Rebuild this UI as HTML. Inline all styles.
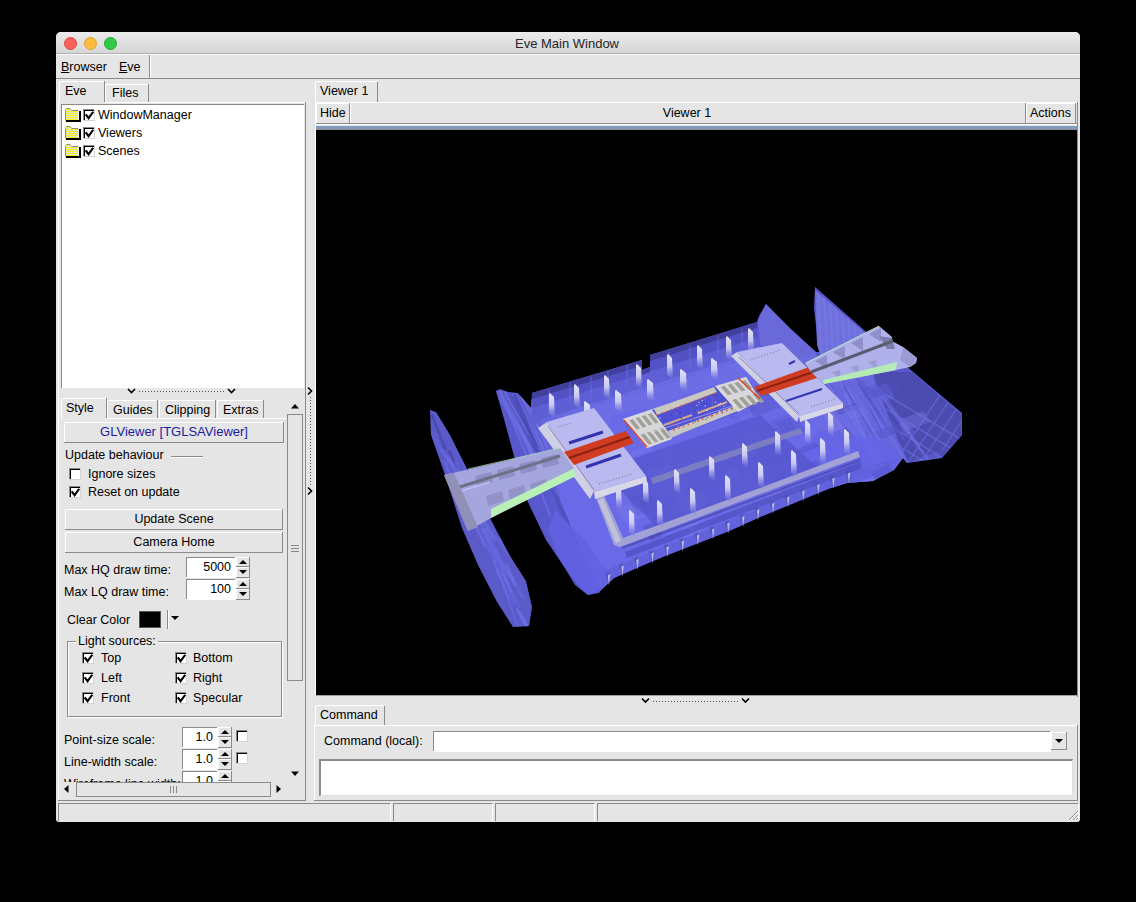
<!DOCTYPE html>
<html><head><meta charset="utf-8"><style>
html,body{margin:0;padding:0}
body{width:1136px;height:902px;background:#000;overflow:hidden;position:relative;font-family:"Liberation Sans",sans-serif}
.a{position:absolute}
.t{position:absolute;font-size:12.5px;line-height:14px;white-space:nowrap;color:#000}
svg.a{overflow:visible}
</style></head><body>
<div class="a" style="left:56px;top:32px;width:1024px;height:790px;background:#e5e5e5;border-radius:5px 5px 3px 3px;"></div>
<div class="a" style="left:56px;top:32px;width:1024px;height:21px;background:linear-gradient(#ebebeb,#d5d5d5);border-radius:5px 5px 0 0;"></div>
<div class="a" style="left:56px;top:53px;width:1024px;height:1px;background:#b0b0b0;"></div>
<div class="a" style="left:56px;top:54px;width:1024px;height:1px;background:#fafafa;"></div>
<div class="a" style="left:64px;top:37px;width:11px;height:11px;border-radius:50%;background:#fc605c;border:0.5px solid #e0443e"></div>
<div class="a" style="left:84px;top:37px;width:11px;height:11px;border-radius:50%;background:#fdbc40;border:0.5px solid #dea123"></div>
<div class="a" style="left:104px;top:37px;width:11px;height:11px;border-radius:50%;background:#34c84a;border:0.5px solid #1aab29"></div>
<div class="t" style="left:367px;width:400px;text-align:center;top:37px;font-size:13px;color:#262626">Eve Main Window</div>
<div class="a" style="left:56px;top:78px;width:1024px;height:1px;background:#8a8a8a;"></div>
<div class="a" style="left:149px;top:55px;width:1px;height:23px;background:#8a8a8a;"></div>
<div class="a" style="left:150px;top:55px;width:1px;height:23px;background:#fff;"></div>
<div class="t" style="left:61px;top:60px;font-size:12.5px;color:#000;"><u>B</u>rowser</div>
<div class="t" style="left:119px;top:60px;font-size:12.5px;color:#000;"><u>E</u>ve</div>
<div class="a" style="left:58px;top:102px;width:248px;height:1px;background:#fff;"></div>
<div class="a" style="left:58px;top:102px;width:1px;height:698px;background:#fff;"></div>
<div class="a" style="left:305px;top:102px;width:1px;height:698px;background:#8a8a8a;"></div>
<div class="a" style="left:58px;top:800px;width:248px;height:1px;background:#8a8a8a;"></div>
<div class="a" style="left:59px;top:81px;width:46px;height:22px;background:#e5e5e5;"></div>
<div class="a" style="left:60px;top:81px;width:44px;height:1px;background:#fff;"></div>
<div class="a" style="left:59px;top:82px;width:1px;height:20px;background:#fff;"></div>
<div class="a" style="left:104px;top:81px;width:1px;height:21px;background:#8a8a8a;"></div>
<div class="a" style="left:106px;top:84px;width:42px;height:1px;background:#fff;"></div>
<div class="a" style="left:105px;top:84px;width:1px;height:18px;background:#fff;"></div>
<div class="a" style="left:148px;top:84px;width:1px;height:18px;background:#8a8a8a;"></div>
<div class="t" style="left:65px;top:84px;font-size:12.5px;color:#000;">Eve</div>
<div class="t" style="left:112px;top:86px;font-size:12.5px;color:#000;">Files</div>
<div class="a" style="left:61px;top:104px;width:243px;height:284px;background:#fff;"></div>
<div class="a" style="left:61px;top:104px;width:243px;height:1px;background:#8a8a8a;"></div>
<div class="a" style="left:61px;top:104px;width:1px;height:284px;background:#8a8a8a;"></div>
<div class="a" style="left:61px;top:387px;width:243px;height:1px;background:#fff;"></div>
<div class="a" style="left:303px;top:104px;width:1px;height:284px;background:#fff;"></div>
<div class="a" style="left:62px;top:105px;width:241px;height:282px;background:#fff;"></div>
<div class="a" style="left:61px;top:104px;width:243px;height:1px;background:#8a8a8a;"></div>
<div class="a" style="left:61px;top:104px;width:1px;height:284px;background:#8a8a8a;"></div>
<svg class="a" style="left:65px;top:108px" width="16" height="13" viewBox="0 0 16 13"><defs><pattern id="fp" width="2" height="2" patternUnits="userSpaceOnUse"><rect width="2" height="2" fill="#d8d8c8"/><rect width="1" height="1" fill="#ffff20"/><rect x="1" y="1" width="1" height="1" fill="#ffff20"/></pattern></defs><path d="M0.5 12.5 L0.5 2.5 L1.5 0.5 L5 0.5 L6.5 2.5 L13.5 2.5" stroke="#8a8a8a" stroke-width="1" fill="none"/><rect x="1" y="1" width="4" height="2" fill="url(#fp)"/><rect x="1" y="3" width="12" height="9" fill="url(#fp)"/><path d="M1 13 L15 13 L15 3" stroke="#000" stroke-width="2" fill="none"/></svg>
<div class="a" style="left:83px;top:109px;width:12px;height:12px;background:#fff;"></div>
<div class="a" style="left:83px;top:109px;width:12px;height:1px;background:#8a8a8a;"></div>
<div class="a" style="left:83px;top:109px;width:1px;height:12px;background:#8a8a8a;"></div>
<div class="a" style="left:84px;top:110px;width:10px;height:1px;background:#000;"></div>
<div class="a" style="left:84px;top:110px;width:1px;height:10px;background:#000;"></div>
<div class="a" style="left:83px;top:120px;width:12px;height:1px;background:#d4d4d4;"></div>
<div class="a" style="left:94px;top:109px;width:1px;height:12px;background:#d4d4d4;"></div>
<svg class="a" style="left:83px;top:109px" width="12" height="12"><path d="M3.3 6.2 L5.6 9.2 L9.6 3.6" stroke="#000" stroke-width="2.1" fill="none" stroke-linecap="square"/></svg>
<div class="t" style="left:98px;top:108px;font-size:12.5px;color:#000;">WindowManager</div>
<svg class="a" style="left:65px;top:126px" width="16" height="13" viewBox="0 0 16 13"><defs><pattern id="fp" width="2" height="2" patternUnits="userSpaceOnUse"><rect width="2" height="2" fill="#d8d8c8"/><rect width="1" height="1" fill="#ffff20"/><rect x="1" y="1" width="1" height="1" fill="#ffff20"/></pattern></defs><path d="M0.5 12.5 L0.5 2.5 L1.5 0.5 L5 0.5 L6.5 2.5 L13.5 2.5" stroke="#8a8a8a" stroke-width="1" fill="none"/><rect x="1" y="1" width="4" height="2" fill="url(#fp)"/><rect x="1" y="3" width="12" height="9" fill="url(#fp)"/><path d="M1 13 L15 13 L15 3" stroke="#000" stroke-width="2" fill="none"/></svg>
<div class="a" style="left:83px;top:127px;width:12px;height:12px;background:#fff;"></div>
<div class="a" style="left:83px;top:127px;width:12px;height:1px;background:#8a8a8a;"></div>
<div class="a" style="left:83px;top:127px;width:1px;height:12px;background:#8a8a8a;"></div>
<div class="a" style="left:84px;top:128px;width:10px;height:1px;background:#000;"></div>
<div class="a" style="left:84px;top:128px;width:1px;height:10px;background:#000;"></div>
<div class="a" style="left:83px;top:138px;width:12px;height:1px;background:#d4d4d4;"></div>
<div class="a" style="left:94px;top:127px;width:1px;height:12px;background:#d4d4d4;"></div>
<svg class="a" style="left:83px;top:127px" width="12" height="12"><path d="M3.3 6.2 L5.6 9.2 L9.6 3.6" stroke="#000" stroke-width="2.1" fill="none" stroke-linecap="square"/></svg>
<div class="t" style="left:98px;top:126px;font-size:12.5px;color:#000;">Viewers</div>
<svg class="a" style="left:65px;top:144px" width="16" height="13" viewBox="0 0 16 13"><defs><pattern id="fp" width="2" height="2" patternUnits="userSpaceOnUse"><rect width="2" height="2" fill="#d8d8c8"/><rect width="1" height="1" fill="#ffff20"/><rect x="1" y="1" width="1" height="1" fill="#ffff20"/></pattern></defs><path d="M0.5 12.5 L0.5 2.5 L1.5 0.5 L5 0.5 L6.5 2.5 L13.5 2.5" stroke="#8a8a8a" stroke-width="1" fill="none"/><rect x="1" y="1" width="4" height="2" fill="url(#fp)"/><rect x="1" y="3" width="12" height="9" fill="url(#fp)"/><path d="M1 13 L15 13 L15 3" stroke="#000" stroke-width="2" fill="none"/></svg>
<div class="a" style="left:83px;top:145px;width:12px;height:12px;background:#fff;"></div>
<div class="a" style="left:83px;top:145px;width:12px;height:1px;background:#8a8a8a;"></div>
<div class="a" style="left:83px;top:145px;width:1px;height:12px;background:#8a8a8a;"></div>
<div class="a" style="left:84px;top:146px;width:10px;height:1px;background:#000;"></div>
<div class="a" style="left:84px;top:146px;width:1px;height:10px;background:#000;"></div>
<div class="a" style="left:83px;top:156px;width:12px;height:1px;background:#d4d4d4;"></div>
<div class="a" style="left:94px;top:145px;width:1px;height:12px;background:#d4d4d4;"></div>
<svg class="a" style="left:83px;top:145px" width="12" height="12"><path d="M3.3 6.2 L5.6 9.2 L9.6 3.6" stroke="#000" stroke-width="2.1" fill="none" stroke-linecap="square"/></svg>
<div class="t" style="left:98px;top:144px;font-size:12.5px;color:#000;">Scenes</div>
<svg class="a" style="left:126px;top:386px" width="112" height="10" viewBox="0 0 112 10"><path d="M2 3 L5.5 6.5 L9 3" stroke="#000" stroke-width="1.6" fill="none"/><path d="M102 3 L105.5 6.5 L109 3" stroke="#000" stroke-width="1.6" fill="none"/><line x1="13" y1="5.5" x2="99" y2="5.5" stroke="#555" stroke-width="1" stroke-dasharray="1,2"/></svg>
<div class="a" style="left:61px;top:418px;width:226px;height:1px;background:#fff;"></div>
<div class="a" style="left:61px;top:398px;width:46px;height:21px;background:#e5e5e5;"></div>
<div class="a" style="left:62px;top:398px;width:44px;height:1px;background:#fff;"></div>
<div class="a" style="left:61px;top:398px;width:1px;height:21px;background:#fff;"></div>
<div class="a" style="left:106px;top:398px;width:1px;height:20px;background:#8a8a8a;"></div>
<div class="a" style="left:108px;top:400px;width:50px;height:1px;background:#fff;"></div>
<div class="a" style="left:107px;top:400px;width:1px;height:18px;background:#fff;"></div>
<div class="a" style="left:157px;top:400px;width:1px;height:18px;background:#8a8a8a;"></div>
<div class="a" style="left:160px;top:400px;width:56px;height:1px;background:#fff;"></div>
<div class="a" style="left:159px;top:400px;width:1px;height:18px;background:#fff;"></div>
<div class="a" style="left:215px;top:400px;width:1px;height:18px;background:#8a8a8a;"></div>
<div class="a" style="left:218px;top:400px;width:46px;height:1px;background:#fff;"></div>
<div class="a" style="left:217px;top:400px;width:1px;height:18px;background:#fff;"></div>
<div class="a" style="left:263px;top:400px;width:1px;height:18px;background:#8a8a8a;"></div>
<div class="t" style="left:66px;top:401px;font-size:12.5px;color:#000;">Style</div>
<div class="t" style="left:113px;top:403px;font-size:12.5px;color:#000;">Guides</div>
<div class="t" style="left:165px;top:403px;font-size:12.5px;color:#000;">Clipping</div>
<div class="t" style="left:223px;top:403px;font-size:12.5px;color:#000;">Extras</div>
<svg class="a" style="left:288px;top:400px" width="14" height="12" viewBox="0 0 14 12"><path d="M3 8.5 L7 4 L11 8.5Z" fill="#000"/></svg>
<div class="a" style="left:287px;top:414px;width:16px;height:267px;background:#e5e5e5;box-sizing:border-box;border:1px solid #8a8a8a;"></div>
<svg class="a" style="left:288px;top:543px" width="14" height="12" viewBox="0 0 14 12"><path d="M3 2.5H11M3 5.5H11M3 8.5H11" stroke="#8a8a8a" stroke-width="1"/></svg>
<svg class="a" style="left:288px;top:768px" width="14" height="12" viewBox="0 0 14 12"><path d="M3 3.5 L7 8 L11 3.5Z" fill="#000"/></svg>
<div class="a" style="left:64px;top:422px;width:220px;height:21px;background:#e5e5e5;"></div>
<div class="a" style="left:64px;top:422px;width:220px;height:1px;background:#fff;"></div>
<div class="a" style="left:64px;top:422px;width:1px;height:21px;background:#fff;"></div>
<div class="a" style="left:64px;top:442px;width:220px;height:1px;background:#8a8a8a;"></div>
<div class="a" style="left:283px;top:422px;width:1px;height:21px;background:#8a8a8a;"></div>
<div class="t" style="left:-26px;width:400px;text-align:center;top:425px;font-size:13px;color:#1c1ca0">GLViewer [TGLSAViewer]</div>
<div class="t" style="left:65px;top:448px;font-size:12.5px;color:#000;">Update behaviour</div>
<div class="a" style="left:171px;top:456px;width:32px;height:1px;background:#8a8a8a;"></div>
<div class="a" style="left:171px;top:457px;width:32px;height:1px;background:#fff;"></div>
<div class="a" style="left:69px;top:468px;width:12px;height:12px;background:#fff;"></div>
<div class="a" style="left:69px;top:468px;width:12px;height:1px;background:#8a8a8a;"></div>
<div class="a" style="left:69px;top:468px;width:1px;height:12px;background:#8a8a8a;"></div>
<div class="a" style="left:70px;top:469px;width:10px;height:1px;background:#000;"></div>
<div class="a" style="left:70px;top:469px;width:1px;height:10px;background:#000;"></div>
<div class="a" style="left:69px;top:479px;width:12px;height:1px;background:#d4d4d4;"></div>
<div class="a" style="left:80px;top:468px;width:1px;height:12px;background:#d4d4d4;"></div>
<div class="t" style="left:88px;top:467px;font-size:12.5px;color:#000;">Ignore sizes</div>
<div class="a" style="left:69px;top:486px;width:12px;height:12px;background:#fff;"></div>
<div class="a" style="left:69px;top:486px;width:12px;height:1px;background:#8a8a8a;"></div>
<div class="a" style="left:69px;top:486px;width:1px;height:12px;background:#8a8a8a;"></div>
<div class="a" style="left:70px;top:487px;width:10px;height:1px;background:#000;"></div>
<div class="a" style="left:70px;top:487px;width:1px;height:10px;background:#000;"></div>
<div class="a" style="left:69px;top:497px;width:12px;height:1px;background:#d4d4d4;"></div>
<div class="a" style="left:80px;top:486px;width:1px;height:12px;background:#d4d4d4;"></div>
<svg class="a" style="left:69px;top:486px" width="12" height="12"><path d="M3.3 6.2 L5.6 9.2 L9.6 3.6" stroke="#000" stroke-width="2.1" fill="none" stroke-linecap="square"/></svg>
<div class="t" style="left:88px;top:485px;font-size:12.5px;color:#000;">Reset on update</div>
<div class="a" style="left:65px;top:509px;width:218px;height:21px;background:#e5e5e5;"></div>
<div class="a" style="left:65px;top:509px;width:218px;height:1px;background:#fff;"></div>
<div class="a" style="left:65px;top:509px;width:1px;height:21px;background:#fff;"></div>
<div class="a" style="left:65px;top:529px;width:218px;height:1px;background:#8a8a8a;"></div>
<div class="a" style="left:282px;top:509px;width:1px;height:21px;background:#8a8a8a;"></div>
<div class="t" style="left:-26px;width:400px;text-align:center;top:512px;font-size:12.5px;color:#000">Update Scene</div>
<div class="a" style="left:65px;top:532px;width:218px;height:21px;background:#e5e5e5;"></div>
<div class="a" style="left:65px;top:532px;width:218px;height:1px;background:#fff;"></div>
<div class="a" style="left:65px;top:532px;width:1px;height:21px;background:#fff;"></div>
<div class="a" style="left:65px;top:552px;width:218px;height:1px;background:#8a8a8a;"></div>
<div class="a" style="left:282px;top:532px;width:1px;height:21px;background:#8a8a8a;"></div>
<div class="t" style="left:-26px;width:400px;text-align:center;top:535px;font-size:12.5px;color:#000">Camera Home</div>
<div class="t" style="left:64px;top:563px;font-size:12.5px;color:#000;">Max HQ draw time:</div>
<div class="a" style="left:186px;top:557px;width:50px;height:21px;background:#fff;"></div>
<div class="a" style="left:186px;top:557px;width:50px;height:1px;background:#8a8a8a;"></div>
<div class="a" style="left:186px;top:557px;width:1px;height:21px;background:#8a8a8a;"></div>
<div class="a" style="left:186px;top:577px;width:50px;height:1px;background:#fff;"></div>
<div class="a" style="left:235px;top:557px;width:1px;height:21px;background:#fff;"></div>
<div class="a" style="left:187px;top:558px;width:49px;height:20px;background:#fff;"></div>
<div class="a" style="left:236px;top:557px;width:14px;height:10px;background:#e5e5e5;"></div>
<div class="a" style="left:236px;top:557px;width:14px;height:1px;background:#fff;"></div>
<div class="a" style="left:236px;top:557px;width:1px;height:10px;background:#fff;"></div>
<div class="a" style="left:236px;top:566px;width:14px;height:1px;background:#8a8a8a;"></div>
<div class="a" style="left:249px;top:557px;width:1px;height:10px;background:#8a8a8a;"></div>
<div class="a" style="left:236px;top:567px;width:14px;height:11px;background:#e5e5e5;"></div>
<div class="a" style="left:236px;top:567px;width:14px;height:1px;background:#fff;"></div>
<div class="a" style="left:236px;top:567px;width:1px;height:11px;background:#fff;"></div>
<div class="a" style="left:236px;top:577px;width:14px;height:1px;background:#8a8a8a;"></div>
<div class="a" style="left:249px;top:567px;width:1px;height:11px;background:#8a8a8a;"></div>
<svg class="a" style="left:236px;top:557px" width="14" height="21" viewBox="0 0 14 21"><path d="M3 7 L7 3 L11 7Z" fill="#000"/><path d="M3 13 L7 17 L11 13Z" fill="#000"/></svg>
<div class="t" style="left:31px;width:200px;text-align:right;top:560px;font-size:12.5px;color:#000">5000</div>
<div class="t" style="left:64px;top:585px;font-size:12.5px;color:#000;">Max LQ draw time:</div>
<div class="a" style="left:186px;top:579px;width:50px;height:21px;background:#fff;"></div>
<div class="a" style="left:186px;top:579px;width:50px;height:1px;background:#8a8a8a;"></div>
<div class="a" style="left:186px;top:579px;width:1px;height:21px;background:#8a8a8a;"></div>
<div class="a" style="left:186px;top:599px;width:50px;height:1px;background:#fff;"></div>
<div class="a" style="left:235px;top:579px;width:1px;height:21px;background:#fff;"></div>
<div class="a" style="left:187px;top:580px;width:49px;height:20px;background:#fff;"></div>
<div class="a" style="left:236px;top:579px;width:14px;height:10px;background:#e5e5e5;"></div>
<div class="a" style="left:236px;top:579px;width:14px;height:1px;background:#fff;"></div>
<div class="a" style="left:236px;top:579px;width:1px;height:10px;background:#fff;"></div>
<div class="a" style="left:236px;top:588px;width:14px;height:1px;background:#8a8a8a;"></div>
<div class="a" style="left:249px;top:579px;width:1px;height:10px;background:#8a8a8a;"></div>
<div class="a" style="left:236px;top:589px;width:14px;height:11px;background:#e5e5e5;"></div>
<div class="a" style="left:236px;top:589px;width:14px;height:1px;background:#fff;"></div>
<div class="a" style="left:236px;top:589px;width:1px;height:11px;background:#fff;"></div>
<div class="a" style="left:236px;top:599px;width:14px;height:1px;background:#8a8a8a;"></div>
<div class="a" style="left:249px;top:589px;width:1px;height:11px;background:#8a8a8a;"></div>
<svg class="a" style="left:236px;top:579px" width="14" height="21" viewBox="0 0 14 21"><path d="M3 7 L7 3 L11 7Z" fill="#000"/><path d="M3 13 L7 17 L11 13Z" fill="#000"/></svg>
<div class="t" style="left:31px;width:200px;text-align:right;top:582px;font-size:12.5px;color:#000">100</div>
<div class="t" style="left:67px;top:613px;font-size:12.5px;color:#000;">Clear Color</div>
<div class="a" style="left:139px;top:611px;width:22px;height:17px;background:#000;box-sizing:border-box;border:1px solid #555;"></div>
<div class="a" style="left:167px;top:610px;width:1px;height:19px;background:#8a8a8a;"></div>
<div class="a" style="left:168px;top:610px;width:1px;height:19px;background:#fff;"></div>
<svg class="a" style="left:170px;top:614px" width="10" height="8" viewBox="0 0 10 8"><path d="M1 2 L5 6 L9 2Z" fill="#000"/></svg>
<div class="a" style="left:67px;top:641px;width:215px;height:76px;background:transparent;box-sizing:border-box;border:1px solid #8a8a8a;box-shadow:inset 1px 1px 0 #fff, 1px 1px 0 #fff;"></div>
<div class="a" style="left:76px;top:634px;width:82px;height:12px;background:#e5e5e5;"></div>
<div class="t" style="left:78px;top:634px;font-size:12.5px;color:#000;">Light sources:</div>
<div class="a" style="left:82px;top:652px;width:12px;height:12px;background:#fff;"></div>
<div class="a" style="left:82px;top:652px;width:12px;height:1px;background:#8a8a8a;"></div>
<div class="a" style="left:82px;top:652px;width:1px;height:12px;background:#8a8a8a;"></div>
<div class="a" style="left:83px;top:653px;width:10px;height:1px;background:#000;"></div>
<div class="a" style="left:83px;top:653px;width:1px;height:10px;background:#000;"></div>
<div class="a" style="left:82px;top:663px;width:12px;height:1px;background:#d4d4d4;"></div>
<div class="a" style="left:93px;top:652px;width:1px;height:12px;background:#d4d4d4;"></div>
<svg class="a" style="left:82px;top:652px" width="12" height="12"><path d="M3.3 6.2 L5.6 9.2 L9.6 3.6" stroke="#000" stroke-width="2.1" fill="none" stroke-linecap="square"/></svg>
<div class="t" style="left:101px;top:651px;font-size:12.5px;color:#000;">Top</div>
<div class="a" style="left:175px;top:652px;width:12px;height:12px;background:#fff;"></div>
<div class="a" style="left:175px;top:652px;width:12px;height:1px;background:#8a8a8a;"></div>
<div class="a" style="left:175px;top:652px;width:1px;height:12px;background:#8a8a8a;"></div>
<div class="a" style="left:176px;top:653px;width:10px;height:1px;background:#000;"></div>
<div class="a" style="left:176px;top:653px;width:1px;height:10px;background:#000;"></div>
<div class="a" style="left:175px;top:663px;width:12px;height:1px;background:#d4d4d4;"></div>
<div class="a" style="left:186px;top:652px;width:1px;height:12px;background:#d4d4d4;"></div>
<svg class="a" style="left:175px;top:652px" width="12" height="12"><path d="M3.3 6.2 L5.6 9.2 L9.6 3.6" stroke="#000" stroke-width="2.1" fill="none" stroke-linecap="square"/></svg>
<div class="t" style="left:193px;top:651px;font-size:12.5px;color:#000;">Bottom</div>
<div class="a" style="left:82px;top:672px;width:12px;height:12px;background:#fff;"></div>
<div class="a" style="left:82px;top:672px;width:12px;height:1px;background:#8a8a8a;"></div>
<div class="a" style="left:82px;top:672px;width:1px;height:12px;background:#8a8a8a;"></div>
<div class="a" style="left:83px;top:673px;width:10px;height:1px;background:#000;"></div>
<div class="a" style="left:83px;top:673px;width:1px;height:10px;background:#000;"></div>
<div class="a" style="left:82px;top:683px;width:12px;height:1px;background:#d4d4d4;"></div>
<div class="a" style="left:93px;top:672px;width:1px;height:12px;background:#d4d4d4;"></div>
<svg class="a" style="left:82px;top:672px" width="12" height="12"><path d="M3.3 6.2 L5.6 9.2 L9.6 3.6" stroke="#000" stroke-width="2.1" fill="none" stroke-linecap="square"/></svg>
<div class="t" style="left:101px;top:671px;font-size:12.5px;color:#000;">Left</div>
<div class="a" style="left:175px;top:672px;width:12px;height:12px;background:#fff;"></div>
<div class="a" style="left:175px;top:672px;width:12px;height:1px;background:#8a8a8a;"></div>
<div class="a" style="left:175px;top:672px;width:1px;height:12px;background:#8a8a8a;"></div>
<div class="a" style="left:176px;top:673px;width:10px;height:1px;background:#000;"></div>
<div class="a" style="left:176px;top:673px;width:1px;height:10px;background:#000;"></div>
<div class="a" style="left:175px;top:683px;width:12px;height:1px;background:#d4d4d4;"></div>
<div class="a" style="left:186px;top:672px;width:1px;height:12px;background:#d4d4d4;"></div>
<svg class="a" style="left:175px;top:672px" width="12" height="12"><path d="M3.3 6.2 L5.6 9.2 L9.6 3.6" stroke="#000" stroke-width="2.1" fill="none" stroke-linecap="square"/></svg>
<div class="t" style="left:193px;top:671px;font-size:12.5px;color:#000;">Right</div>
<div class="a" style="left:82px;top:692px;width:12px;height:12px;background:#fff;"></div>
<div class="a" style="left:82px;top:692px;width:12px;height:1px;background:#8a8a8a;"></div>
<div class="a" style="left:82px;top:692px;width:1px;height:12px;background:#8a8a8a;"></div>
<div class="a" style="left:83px;top:693px;width:10px;height:1px;background:#000;"></div>
<div class="a" style="left:83px;top:693px;width:1px;height:10px;background:#000;"></div>
<div class="a" style="left:82px;top:703px;width:12px;height:1px;background:#d4d4d4;"></div>
<div class="a" style="left:93px;top:692px;width:1px;height:12px;background:#d4d4d4;"></div>
<svg class="a" style="left:82px;top:692px" width="12" height="12"><path d="M3.3 6.2 L5.6 9.2 L9.6 3.6" stroke="#000" stroke-width="2.1" fill="none" stroke-linecap="square"/></svg>
<div class="t" style="left:101px;top:691px;font-size:12.5px;color:#000;">Front</div>
<div class="a" style="left:175px;top:692px;width:12px;height:12px;background:#fff;"></div>
<div class="a" style="left:175px;top:692px;width:12px;height:1px;background:#8a8a8a;"></div>
<div class="a" style="left:175px;top:692px;width:1px;height:12px;background:#8a8a8a;"></div>
<div class="a" style="left:176px;top:693px;width:10px;height:1px;background:#000;"></div>
<div class="a" style="left:176px;top:693px;width:1px;height:10px;background:#000;"></div>
<div class="a" style="left:175px;top:703px;width:12px;height:1px;background:#d4d4d4;"></div>
<div class="a" style="left:186px;top:692px;width:1px;height:12px;background:#d4d4d4;"></div>
<svg class="a" style="left:175px;top:692px" width="12" height="12"><path d="M3.3 6.2 L5.6 9.2 L9.6 3.6" stroke="#000" stroke-width="2.1" fill="none" stroke-linecap="square"/></svg>
<div class="t" style="left:193px;top:691px;font-size:12.5px;color:#000;">Specular</div>
<div class="a" style="left:58px;top:720px;width:229px;height:62px;overflow:hidden">
</div>
<div class="t" style="left:64px;top:733px;font-size:12.5px;color:#000;">Point-size scale:</div>
<div class="a" style="left:182px;top:727px;width:36px;height:21px;background:#fff;"></div>
<div class="a" style="left:182px;top:727px;width:36px;height:1px;background:#8a8a8a;"></div>
<div class="a" style="left:182px;top:727px;width:1px;height:21px;background:#8a8a8a;"></div>
<div class="a" style="left:182px;top:747px;width:36px;height:1px;background:#fff;"></div>
<div class="a" style="left:217px;top:727px;width:1px;height:21px;background:#fff;"></div>
<div class="a" style="left:183px;top:728px;width:35px;height:20px;background:#fff;"></div>
<div class="a" style="left:218px;top:727px;width:14px;height:10px;background:#e5e5e5;"></div>
<div class="a" style="left:218px;top:727px;width:14px;height:1px;background:#fff;"></div>
<div class="a" style="left:218px;top:727px;width:1px;height:10px;background:#fff;"></div>
<div class="a" style="left:218px;top:736px;width:14px;height:1px;background:#8a8a8a;"></div>
<div class="a" style="left:231px;top:727px;width:1px;height:10px;background:#8a8a8a;"></div>
<div class="a" style="left:218px;top:737px;width:14px;height:11px;background:#e5e5e5;"></div>
<div class="a" style="left:218px;top:737px;width:14px;height:1px;background:#fff;"></div>
<div class="a" style="left:218px;top:737px;width:1px;height:11px;background:#fff;"></div>
<div class="a" style="left:218px;top:747px;width:14px;height:1px;background:#8a8a8a;"></div>
<div class="a" style="left:231px;top:737px;width:1px;height:11px;background:#8a8a8a;"></div>
<svg class="a" style="left:218px;top:727px" width="14" height="21" viewBox="0 0 14 21"><path d="M3 7 L7 3 L11 7Z" fill="#000"/><path d="M3 13 L7 17 L11 13Z" fill="#000"/></svg>
<div class="t" style="left:13px;width:200px;text-align:right;top:730px;font-size:12.5px;color:#000">1.0</div>
<div class="a" style="left:236px;top:730px;width:12px;height:12px;background:#fff;"></div>
<div class="a" style="left:236px;top:730px;width:12px;height:1px;background:#8a8a8a;"></div>
<div class="a" style="left:236px;top:730px;width:1px;height:12px;background:#8a8a8a;"></div>
<div class="a" style="left:237px;top:731px;width:10px;height:1px;background:#000;"></div>
<div class="a" style="left:237px;top:731px;width:1px;height:10px;background:#000;"></div>
<div class="a" style="left:236px;top:741px;width:12px;height:1px;background:#d4d4d4;"></div>
<div class="a" style="left:247px;top:730px;width:1px;height:12px;background:#d4d4d4;"></div>
<div class="t" style="left:64px;top:755px;font-size:12.5px;color:#000;">Line-width scale:</div>
<div class="a" style="left:182px;top:749px;width:36px;height:21px;background:#fff;"></div>
<div class="a" style="left:182px;top:749px;width:36px;height:1px;background:#8a8a8a;"></div>
<div class="a" style="left:182px;top:749px;width:1px;height:21px;background:#8a8a8a;"></div>
<div class="a" style="left:182px;top:769px;width:36px;height:1px;background:#fff;"></div>
<div class="a" style="left:217px;top:749px;width:1px;height:21px;background:#fff;"></div>
<div class="a" style="left:183px;top:750px;width:35px;height:20px;background:#fff;"></div>
<div class="a" style="left:218px;top:749px;width:14px;height:10px;background:#e5e5e5;"></div>
<div class="a" style="left:218px;top:749px;width:14px;height:1px;background:#fff;"></div>
<div class="a" style="left:218px;top:749px;width:1px;height:10px;background:#fff;"></div>
<div class="a" style="left:218px;top:758px;width:14px;height:1px;background:#8a8a8a;"></div>
<div class="a" style="left:231px;top:749px;width:1px;height:10px;background:#8a8a8a;"></div>
<div class="a" style="left:218px;top:759px;width:14px;height:11px;background:#e5e5e5;"></div>
<div class="a" style="left:218px;top:759px;width:14px;height:1px;background:#fff;"></div>
<div class="a" style="left:218px;top:759px;width:1px;height:11px;background:#fff;"></div>
<div class="a" style="left:218px;top:769px;width:14px;height:1px;background:#8a8a8a;"></div>
<div class="a" style="left:231px;top:759px;width:1px;height:11px;background:#8a8a8a;"></div>
<svg class="a" style="left:218px;top:749px" width="14" height="21" viewBox="0 0 14 21"><path d="M3 7 L7 3 L11 7Z" fill="#000"/><path d="M3 13 L7 17 L11 13Z" fill="#000"/></svg>
<div class="t" style="left:13px;width:200px;text-align:right;top:752px;font-size:12.5px;color:#000">1.0</div>
<div class="a" style="left:236px;top:752px;width:12px;height:12px;background:#fff;"></div>
<div class="a" style="left:236px;top:752px;width:12px;height:1px;background:#8a8a8a;"></div>
<div class="a" style="left:236px;top:752px;width:1px;height:12px;background:#8a8a8a;"></div>
<div class="a" style="left:237px;top:753px;width:10px;height:1px;background:#000;"></div>
<div class="a" style="left:237px;top:753px;width:1px;height:10px;background:#000;"></div>
<div class="a" style="left:236px;top:763px;width:12px;height:1px;background:#d4d4d4;"></div>
<div class="a" style="left:247px;top:752px;width:1px;height:12px;background:#d4d4d4;"></div>
<div class="t" style="left:64px;top:777px;font-size:12.5px;color:#000;">Wireframe line width:</div>
<div class="a" style="left:182px;top:771px;width:36px;height:21px;background:#fff;"></div>
<div class="a" style="left:182px;top:771px;width:36px;height:1px;background:#8a8a8a;"></div>
<div class="a" style="left:182px;top:771px;width:1px;height:21px;background:#8a8a8a;"></div>
<div class="a" style="left:182px;top:791px;width:36px;height:1px;background:#fff;"></div>
<div class="a" style="left:217px;top:771px;width:1px;height:21px;background:#fff;"></div>
<div class="a" style="left:183px;top:772px;width:35px;height:20px;background:#fff;"></div>
<div class="a" style="left:218px;top:771px;width:14px;height:10px;background:#e5e5e5;"></div>
<div class="a" style="left:218px;top:771px;width:14px;height:1px;background:#fff;"></div>
<div class="a" style="left:218px;top:771px;width:1px;height:10px;background:#fff;"></div>
<div class="a" style="left:218px;top:780px;width:14px;height:1px;background:#8a8a8a;"></div>
<div class="a" style="left:231px;top:771px;width:1px;height:10px;background:#8a8a8a;"></div>
<div class="a" style="left:218px;top:781px;width:14px;height:11px;background:#e5e5e5;"></div>
<div class="a" style="left:218px;top:781px;width:14px;height:1px;background:#fff;"></div>
<div class="a" style="left:218px;top:781px;width:1px;height:11px;background:#fff;"></div>
<div class="a" style="left:218px;top:791px;width:14px;height:1px;background:#8a8a8a;"></div>
<div class="a" style="left:231px;top:781px;width:1px;height:11px;background:#8a8a8a;"></div>
<svg class="a" style="left:218px;top:771px" width="14" height="21" viewBox="0 0 14 21"><path d="M3 7 L7 3 L11 7Z" fill="#000"/><path d="M3 13 L7 17 L11 13Z" fill="#000"/></svg>
<div class="t" style="left:13px;width:200px;text-align:right;top:774px;font-size:12.5px;color:#000">1.0</div>
<div class="a" style="left:59px;top:782px;width:228px;height:17px;background:#e5e5e5;"></div>
<svg class="a" style="left:61px;top:782px" width="12" height="14" viewBox="0 0 12 14"><path d="M7.5 3 L3 7 L7.5 11Z" fill="#000"/></svg>
<div class="a" style="left:76px;top:782px;width:195px;height:15px;background:#e5e5e5;box-sizing:border-box;border:1px solid #8a8a8a;"></div>
<svg class="a" style="left:167px;top:784px" width="14" height="11" viewBox="0 0 14 11"><path d="M3.5 2V9M6.5 2V9M9.5 2V9" stroke="#8a8a8a" stroke-width="1"/></svg>
<svg class="a" style="left:273px;top:782px" width="12" height="14" viewBox="0 0 12 14"><path d="M3.5 3 L8 7 L3.5 11Z" fill="#000"/></svg>
<svg class="a" style="left:306px;top:386px" width="8" height="10" viewBox="0 0 8 10"><path d="M2 1.5 L5.5 5 L2 8.5" stroke="#000" stroke-width="1.6" fill="none"/></svg>
<svg class="a" style="left:306px;top:486px" width="8" height="10" viewBox="0 0 8 10"><path d="M2 1.5 L5.5 5 L2 8.5" stroke="#000" stroke-width="1.6" fill="none"/></svg>
<svg class="a" style="left:309px;top:396px" width="3" height="90" viewBox="0 0 3 90"><line x1="1.5" y1="1" x2="1.5" y2="90" stroke="#555" stroke-width="1" stroke-dasharray="1,2"/></svg>
<div class="a" style="left:315px;top:82px;width:63px;height:20px;background:#e5e5e5;"></div>
<div class="a" style="left:316px;top:81px;width:61px;height:1px;background:#fff;"></div>
<div class="a" style="left:315px;top:82px;width:1px;height:20px;background:#fff;"></div>
<div class="a" style="left:377px;top:82px;width:1px;height:20px;background:#8a8a8a;"></div>
<div class="t" style="left:320px;top:84px;font-size:12.5px;color:#000;">Viewer 1</div>
<div class="a" style="left:315px;top:102px;width:763px;height:1px;background:#fff;"></div>
<div class="a" style="left:315px;top:102px;width:1px;height:595px;background:#fff;"></div>
<div class="a" style="left:1077px;top:102px;width:1px;height:595px;background:#8a8a8a;"></div>
<div class="a" style="left:316px;top:103px;width:34px;height:21px;background:#e5e5e5;"></div>
<div class="a" style="left:316px;top:103px;width:34px;height:1px;background:#fff;"></div>
<div class="a" style="left:316px;top:103px;width:1px;height:21px;background:#fff;"></div>
<div class="a" style="left:316px;top:123px;width:34px;height:1px;background:#8a8a8a;"></div>
<div class="a" style="left:349px;top:103px;width:1px;height:21px;background:#8a8a8a;"></div>
<div class="t" style="left:320px;top:106px;font-size:12.5px;color:#000;">Hide</div>
<div class="t" style="left:487px;width:400px;text-align:center;top:106px;font-size:12.5px;color:#000">Viewer 1</div>
<div class="a" style="left:1026px;top:103px;width:50px;height:21px;background:#e5e5e5;"></div>
<div class="a" style="left:1026px;top:103px;width:50px;height:1px;background:#fff;"></div>
<div class="a" style="left:1026px;top:103px;width:1px;height:21px;background:#fff;"></div>
<div class="a" style="left:1026px;top:123px;width:50px;height:1px;background:#8a8a8a;"></div>
<div class="a" style="left:1075px;top:103px;width:1px;height:21px;background:#8a8a8a;"></div>
<div class="t" style="left:1030px;top:106px;font-size:12.5px;color:#000;">Actions</div>
<div class="a" style="left:1025px;top:103px;width:1px;height:20px;background:#8a8a8a;"></div>
<div class="a" style="left:350px;top:103px;width:1px;height:21px;background:#fff;"></div>
<div class="a" style="left:316px;top:123px;width:761px;height:1px;background:#8a8a8a;"></div>
<div class="a" style="left:316px;top:124px;width:761px;height:1px;background:#fff;"></div>
<div class="a" style="left:316px;top:126px;width:761px;height:3px;background:#7f9bbd;"></div>
<div class="a" style="left:316px;top:129px;width:761px;height:1px;background:#909090;"></div>
<div class="a" style="left:316px;top:130px;width:761px;height:565px;background:#000;"></div>
<svg class="a" style="left:316px;top:130px" width="761" height="565" viewBox="316 130 761 565"><polygon points="430,410 436,412 450,435 466,467 492,522 510,556 526,581 532,607 529,626 513,627 497,602 478,565 462,528 444,472 431,435" fill="#5a5ac8"/><clipPath id="lwc"><polygon points="430,410 436,412 450,435 466,467 492,522 510,556 526,581 532,607 529,626 513,627 497,602 478,565 462,528 444,472 431,435"/></clipPath><g clip-path="url(#lwc)"><line x1="476.4" y1="515.7" x2="492.7" y2="547.8" stroke="#7070e8" stroke-width="2.0" stroke-opacity="0.53" /><line x1="498.8" y1="537.3" x2="514.9" y2="561.1" stroke="#6c6ce4" stroke-width="3.0" stroke-opacity="0.49" /><line x1="480.1" y1="510.4" x2="495.7" y2="550.5" stroke="#6c6ce4" stroke-width="1.6" stroke-opacity="0.42" /><line x1="444.8" y1="461.3" x2="457.3" y2="493.8" stroke="#7070e8" stroke-width="3.1" stroke-opacity="0.52" /><line x1="495.4" y1="548.0" x2="514.4" y2="604.8" stroke="#6c6ce4" stroke-width="3.3" stroke-opacity="0.46" /><line x1="448.7" y1="450.8" x2="472.5" y2="494.2" stroke="#4040a0" stroke-width="2.5" stroke-opacity="0.69" /><line x1="504.7" y1="586.4" x2="530.6" y2="636.0" stroke="#6060d8" stroke-width="2.5" stroke-opacity="0.55" /><line x1="453.3" y1="449.4" x2="470.1" y2="473.1" stroke="#6060d8" stroke-width="3.4" stroke-opacity="0.39" /><line x1="446.7" y1="454.2" x2="474.0" y2="497.1" stroke="#7070e8" stroke-width="2.6" stroke-opacity="0.42" /><line x1="495.8" y1="570.2" x2="505.4" y2="588.0" stroke="#7070e8" stroke-width="1.5" stroke-opacity="0.65" /><line x1="529.3" y1="629.6" x2="537.8" y2="643.0" stroke="#6c6ce4" stroke-width="1.6" stroke-opacity="0.4" /><line x1="464.3" y1="507.1" x2="489.7" y2="553.0" stroke="#6c6ce4" stroke-width="1.7" stroke-opacity="0.55" /><line x1="456.3" y1="459.7" x2="467.9" y2="493.1" stroke="#6060d8" stroke-width="3.6" stroke-opacity="0.4" /><line x1="471.2" y1="489.2" x2="481.9" y2="512.1" stroke="#7070e8" stroke-width="1.9" stroke-opacity="0.57" /><line x1="489.1" y1="526.9" x2="509.8" y2="557.2" stroke="#6c6ce4" stroke-width="1.8" stroke-opacity="0.36" /><line x1="521.0" y1="621.1" x2="530.7" y2="645.8" stroke="#6060d8" stroke-width="2.2" stroke-opacity="0.41" /><line x1="493.4" y1="559.4" x2="507.8" y2="597.0" stroke="#6c6ce4" stroke-width="2.2" stroke-opacity="0.67" /><line x1="440.7" y1="449.2" x2="460.6" y2="478.1" stroke="#7070e8" stroke-width="2.2" stroke-opacity="0.54" /><line x1="519.2" y1="612.0" x2="536.7" y2="642.6" stroke="#7070e8" stroke-width="3.0" stroke-opacity="0.67" /><line x1="474.6" y1="508.3" x2="481.7" y2="523.2" stroke="#6c6ce4" stroke-width="2.7" stroke-opacity="0.61" /><line x1="471.9" y1="470.1" x2="487.3" y2="506.5" stroke="#7070e8" stroke-width="3.5" stroke-opacity="0.67" /><line x1="468.9" y1="493.7" x2="494.7" y2="541.3" stroke="#6c6ce4" stroke-width="3.7" stroke-opacity="0.55" /><line x1="490.1" y1="546.0" x2="514.0" y2="581.1" stroke="#6c6ce4" stroke-width="4.0" stroke-opacity="0.66" /><line x1="500.6" y1="571.3" x2="519.9" y2="607.6" stroke="#6c6ce4" stroke-width="2.8" stroke-opacity="0.53" /><line x1="452.8" y1="467.1" x2="484.9" y2="515.5" stroke="#6060d8" stroke-width="2.1" stroke-opacity="0.35" /><line x1="463.7" y1="468.8" x2="471.4" y2="490.0" stroke="#6060d8" stroke-width="2.7" stroke-opacity="0.43" /><line x1="465.5" y1="499.7" x2="485.1" y2="546.9" stroke="#7070e8" stroke-width="3.7" stroke-opacity="0.48" /><line x1="484.6" y1="528.1" x2="498.1" y2="562.9" stroke="#6c6ce4" stroke-width="3.3" stroke-opacity="0.68" /><line x1="451.1" y1="468.5" x2="465.5" y2="491.8" stroke="#6060d8" stroke-width="2.5" stroke-opacity="0.53" /><line x1="501.5" y1="561.3" x2="523.1" y2="598.7" stroke="#6c6ce4" stroke-width="2.2" stroke-opacity="0.56" /><line x1="493.4" y1="552.9" x2="512.7" y2="592.7" stroke="#7070e8" stroke-width="2.5" stroke-opacity="0.42" /><line x1="502.2" y1="581.0" x2="518.5" y2="629.2" stroke="#6c6ce4" stroke-width="2.6" stroke-opacity="0.57" /><line x1="501.7" y1="560.0" x2="526.0" y2="598.8" stroke="#6060d8" stroke-width="2.1" stroke-opacity="0.6" /><line x1="506.2" y1="563.1" x2="515.7" y2="586.4" stroke="#7070e8" stroke-width="2.5" stroke-opacity="0.63" /><line x1="512.4" y1="613.5" x2="538.5" y2="653.2" stroke="#6060d8" stroke-width="2.0" stroke-opacity="0.66" /><line x1="431.7" y1="414.5" x2="445.5" y2="449.5" stroke="#4040a0" stroke-width="2.7" stroke-opacity="0.58" /><line x1="454.9" y1="460.4" x2="472.2" y2="500.7" stroke="#7070e8" stroke-width="2.1" stroke-opacity="0.49" /><line x1="435.0" y1="438.4" x2="464.4" y2="487.2" stroke="#6c6ce4" stroke-width="2.4" stroke-opacity="0.38" /><line x1="475.1" y1="510.2" x2="496.3" y2="540.4" stroke="#6c6ce4" stroke-width="2.6" stroke-opacity="0.36" /><line x1="487.0" y1="532.9" x2="498.5" y2="567.3" stroke="#6060d8" stroke-width="3.9" stroke-opacity="0.52" /><line x1="516.6" y1="608.5" x2="536.3" y2="641.8" stroke="#7070e8" stroke-width="2.8" stroke-opacity="0.65" /><line x1="482.2" y1="528.0" x2="500.4" y2="577.8" stroke="#7070e8" stroke-width="2.3" stroke-opacity="0.4" /><line x1="479.9" y1="527.1" x2="498.5" y2="555.0" stroke="#6c6ce4" stroke-width="3.0" stroke-opacity="0.36" /><line x1="527.3" y1="616.4" x2="549.6" y2="662.4" stroke="#6060d8" stroke-width="1.7" stroke-opacity="0.41" /><line x1="522.3" y1="618.5" x2="546.7" y2="663.3" stroke="#7070e8" stroke-width="2.7" stroke-opacity="0.39" /></g><polygon points="496,391 500,389 508,392 518,393 531,408 532,393 642,360 642,370 650,367 650,355 700,340 757,322 759,316 766,304 790,330 816,352 819,352 814,308 815,287 864,330 912,371 962,413 962,435 942,458 907,463 903,458 894,470 873,481 847,483 831,488 760,517 729,531 696,544 665,556 639,567 614,578 600,591 588,595 581,589 563,565 546,540 527,500 514,456 504,419" fill="#5858cc"/><clipPath id="bodyc"><polygon points="496,391 500,389 508,392 518,393 531,408 532,393 642,360 642,370 650,367 650,355 700,340 757,322 759,316 766,304 790,330 816,352 819,352 814,308 815,287 864,330 912,371 962,413 962,435 942,458 907,463 903,458 894,470 873,481 847,483 831,488 760,517 729,531 696,544 665,556 639,567 614,578 600,591 588,595 581,589 563,565 546,540 527,500 514,456 504,419"/></clipPath><g clip-path="url(#bodyc)"><line x1="506.9" y1="393.2" x2="584.3" y2="523.0" stroke="#4848b0" stroke-width="2.3" stroke-opacity="0.47" /><line x1="530.7" y1="399.1" x2="563.7" y2="463.1" stroke="#7a7af0" stroke-width="1.6" stroke-opacity="0.32" /><line x1="521.3" y1="395.7" x2="585.2" y2="529.4" stroke="#7a7af0" stroke-width="1.2" stroke-opacity="0.31" /><line x1="505.2" y1="392.2" x2="541.2" y2="462.1" stroke="#4848b0" stroke-width="2.4" stroke-opacity="0.47" /><line x1="520.9" y1="396.8" x2="590.1" y2="518.5" stroke="#7070e8" stroke-width="1.2" stroke-opacity="0.47" /><line x1="520.7" y1="396.2" x2="574.4" y2="519.4" stroke="#7a7af0" stroke-width="2.2" stroke-opacity="0.41" /><line x1="504.0" y1="392.5" x2="590.4" y2="537.9" stroke="#7a7af0" stroke-width="1.8" stroke-opacity="0.56" /><line x1="523.9" y1="397.3" x2="623.5" y2="567.5" stroke="#4848b0" stroke-width="2.0" stroke-opacity="0.35" /><line x1="512.8" y1="394.9" x2="574.4" y2="535.5" stroke="#4848b0" stroke-width="2.4" stroke-opacity="0.4" /><line x1="510.0" y1="393.5" x2="598.0" y2="540.8" stroke="#4848b0" stroke-width="1.2" stroke-opacity="0.44" /><line x1="519.9" y1="396.6" x2="586.5" y2="540.2" stroke="#7a7af0" stroke-width="3.5" stroke-opacity="0.39" /><line x1="512.4" y1="393.9" x2="540.9" y2="450.2" stroke="#7070e8" stroke-width="1.4" stroke-opacity="0.45" /><line x1="503.5" y1="392.2" x2="578.8" y2="537.2" stroke="#7a7af0" stroke-width="3.3" stroke-opacity="0.32" /><line x1="514.3" y1="394.5" x2="586.4" y2="563.4" stroke="#4848b0" stroke-width="3.2" stroke-opacity="0.51" /><line x1="536.6" y1="399.9" x2="591.8" y2="498.8" stroke="#6868e0" stroke-width="1.2" stroke-opacity="0.37" /><line x1="505.2" y1="392.3" x2="574.0" y2="517.1" stroke="#7a7af0" stroke-width="1.0" stroke-opacity="0.46" /><line x1="519.3" y1="396.1" x2="549.2" y2="467.7" stroke="#7070e8" stroke-width="3.4" stroke-opacity="0.44" /><line x1="533.6" y1="398.7" x2="601.1" y2="538.5" stroke="#7a7af0" stroke-width="2.0" stroke-opacity="0.33" /><line x1="518.7" y1="396.3" x2="552.8" y2="456.8" stroke="#4848b0" stroke-width="1.4" stroke-opacity="0.48" /><line x1="500.5" y1="391.0" x2="550.6" y2="516.5" stroke="#7070e8" stroke-width="2.5" stroke-opacity="0.56" /><line x1="518.5" y1="396.1" x2="563.2" y2="480.3" stroke="#7070e8" stroke-width="1.9" stroke-opacity="0.33" /><line x1="518.4" y1="394.9" x2="578.8" y2="506.9" stroke="#4848b0" stroke-width="1.4" stroke-opacity="0.52" /><line x1="516.3" y1="394.8" x2="581.3" y2="510.0" stroke="#4848b0" stroke-width="3.4" stroke-opacity="0.34" /><line x1="514.9" y1="395.4" x2="563.9" y2="520.1" stroke="#4848b0" stroke-width="3.2" stroke-opacity="0.46" /><line x1="531.5" y1="399.1" x2="571.4" y2="481.1" stroke="#6868e0" stroke-width="2.3" stroke-opacity="0.48" /><line x1="529.1" y1="397.9" x2="571.5" y2="474.2" stroke="#6868e0" stroke-width="2.0" stroke-opacity="0.36" /><line x1="517.1" y1="394.9" x2="596.0" y2="577.1" stroke="#6868e0" stroke-width="2.2" stroke-opacity="0.51" /><line x1="533.9" y1="399.6" x2="603.6" y2="577.6" stroke="#4848b0" stroke-width="3.4" stroke-opacity="0.32" /><line x1="499.9" y1="391.0" x2="547.9" y2="487.0" stroke="#7070e8" stroke-width="3.5" stroke-opacity="0.44" /><line x1="523.9" y1="396.5" x2="554.0" y2="461.8" stroke="#6868e0" stroke-width="3.3" stroke-opacity="0.44" /><line x1="504.9" y1="391.8" x2="547.0" y2="489.6" stroke="#7a7af0" stroke-width="3.4" stroke-opacity="0.44" /><line x1="523.2" y1="397.4" x2="553.1" y2="474.0" stroke="#7a7af0" stroke-width="1.1" stroke-opacity="0.54" /><line x1="503.8" y1="391.5" x2="586.5" y2="570.5" stroke="#6868e0" stroke-width="1.9" stroke-opacity="0.31" /><line x1="529.3" y1="398.0" x2="559.4" y2="466.0" stroke="#6868e0" stroke-width="1.3" stroke-opacity="0.55" /><line x1="503.0" y1="392.1" x2="552.0" y2="480.4" stroke="#4848b0" stroke-width="2.5" stroke-opacity="0.46" /><line x1="526.7" y1="398.3" x2="588.8" y2="549.7" stroke="#7a7af0" stroke-width="2.7" stroke-opacity="0.55" /><line x1="528.9" y1="398.8" x2="564.9" y2="471.6" stroke="#6868e0" stroke-width="3.2" stroke-opacity="0.48" /><line x1="524.9" y1="397.8" x2="558.9" y2="470.0" stroke="#7070e8" stroke-width="1.3" stroke-opacity="0.4" /><line x1="517.1" y1="395.2" x2="603.2" y2="541.5" stroke="#6868e0" stroke-width="2.4" stroke-opacity="0.36" /><line x1="495.3" y1="390.4" x2="559.3" y2="495.8" stroke="#7070e8" stroke-width="3.2" stroke-opacity="0.43" /></g><polygon points="545,415 757,345 860,430 880,470 831,486 715,533 628,567 600,585 585,560 560,500" fill="#6a6ae8"/><polygon points="532,393 642,360 642,370 650,367 650,355 757,322 757,352 650,385 532,423" fill="#5252c4" fill-opacity="0.95"/><polygon points="532,408 757,338 757,356 532,426" fill="#6262d8" fill-opacity="0.8"/><polygon points="540,420 757,352 757,372 700,390 600,420 545,438" fill="#7070e4" fill-opacity="0.45"/><polygon points="532,393 642,360 642,366 532,399" fill="#40409c"/><polygon points="650,355 757,322 757,328 650,361" fill="#40409c"/><polygon points="642,370 650,367 650,372 642,375" fill="#40409c"/><line x1="549" y1="389.6355555555556" x2="549" y2="413.6355555555556" stroke="#7070e4" stroke-width="1" stroke-opacity="0.7" /><line x1="570" y1="383.0088888888889" x2="570" y2="407.0088888888889" stroke="#7070e4" stroke-width="1" stroke-opacity="0.7" /><line x1="591" y1="376.38222222222225" x2="591" y2="400.38222222222225" stroke="#7070e4" stroke-width="1" stroke-opacity="0.7" /><line x1="608" y1="371.0177777777778" x2="608" y2="395.0177777777778" stroke="#7070e4" stroke-width="1" stroke-opacity="0.7" /><line x1="627" y1="365.02222222222224" x2="627" y2="389.02222222222224" stroke="#7070e4" stroke-width="1" stroke-opacity="0.7" /><line x1="669" y1="351.7688888888889" x2="669" y2="375.7688888888889" stroke="#7070e4" stroke-width="1" stroke-opacity="0.7" /><line x1="690" y1="345.14222222222224" x2="690" y2="369.14222222222224" stroke="#7070e4" stroke-width="1" stroke-opacity="0.7" /><line x1="718" y1="336.3066666666667" x2="718" y2="360.3066666666667" stroke="#7070e4" stroke-width="1" stroke-opacity="0.7" /><line x1="742" y1="328.73333333333335" x2="742" y2="352.73333333333335" stroke="#7070e4" stroke-width="1" stroke-opacity="0.7" /><polygon points="758,320 766,304 790,328 816,352 815,372 790,362 760,345" fill="#6c6cdc" fill-opacity="0.9"/><polygon points="815,290 864,332 912,372 962,415 961,436 942,457 908,462 900,455 885,445 855,410 828,375 817,345" fill="#5858cc"/><clipPath id="rwc"><polygon points="815,290 864,332 912,372 962,415 961,436 942,457 908,462 900,455 885,445 855,410 828,375 817,345"/></clipPath><g clip-path="url(#rwc)"><polygon points="815,290 864,332 885,352 870,375 850,382 825,372 817,345" fill="#7272e0" fill-opacity="0.9"/><line x1="818" y1="292" x2="822" y2="372" stroke="#8484ec" stroke-width="1.5" stroke-opacity="0.5" /><line x1="824" y1="297" x2="828" y2="372" stroke="#8484ec" stroke-width="1.5" stroke-opacity="0.5" /><line x1="830" y1="302" x2="834" y2="372" stroke="#8484ec" stroke-width="1.5" stroke-opacity="0.5" /><line x1="836" y1="307" x2="840" y2="372" stroke="#8484ec" stroke-width="1.5" stroke-opacity="0.5" /><line x1="842" y1="312" x2="846" y2="372" stroke="#8484ec" stroke-width="1.5" stroke-opacity="0.5" /><line x1="848" y1="317" x2="852" y2="372" stroke="#8484ec" stroke-width="1.5" stroke-opacity="0.5" /><line x1="854" y1="322" x2="858" y2="372" stroke="#8484ec" stroke-width="1.5" stroke-opacity="0.5" /><line x1="860" y1="327" x2="864" y2="372" stroke="#8484ec" stroke-width="1.5" stroke-opacity="0.5" /><line x1="866" y1="332" x2="870" y2="372" stroke="#8484ec" stroke-width="1.5" stroke-opacity="0.5" /><polygon points="872,372 912,372 962,415 961,436 942,457 908,462 898,440 885,408" fill="#4c4cb0"/><clipPath id="dkc"><polygon points="872,372 912,372 962,415 961,436 942,457 908,462 898,440 885,408"/></clipPath><g clip-path="url(#dkc)"><line x1="870" y1="385" x2="970" y2="445" stroke="#6a6ad8" stroke-width="1.2" stroke-opacity="0.85" /><line x1="874" y1="402" x2="974" y2="462" stroke="#6a6ad8" stroke-width="1.2" stroke-opacity="0.85" /><line x1="878" y1="419" x2="978" y2="479" stroke="#6a6ad8" stroke-width="1.2" stroke-opacity="0.85" /><line x1="882" y1="436" x2="982" y2="496" stroke="#6a6ad8" stroke-width="1.2" stroke-opacity="0.85" /><line x1="886" y1="453" x2="986" y2="513" stroke="#6a6ad8" stroke-width="1.2" stroke-opacity="0.85" /><line x1="890" y1="470" x2="950" y2="380" stroke="#6a6ad8" stroke-width="1.2" stroke-opacity="0.85" /><line x1="903" y1="470" x2="963" y2="380" stroke="#6a6ad8" stroke-width="1.2" stroke-opacity="0.85" /><line x1="916" y1="470" x2="976" y2="380" stroke="#6a6ad8" stroke-width="1.2" stroke-opacity="0.85" /><line x1="929" y1="470" x2="989" y2="380" stroke="#6a6ad8" stroke-width="1.2" stroke-opacity="0.85" /><line x1="942" y1="470" x2="1002" y2="380" stroke="#6a6ad8" stroke-width="1.2" stroke-opacity="0.85" /><line x1="955" y1="470" x2="1015" y2="380" stroke="#6a6ad8" stroke-width="1.2" stroke-opacity="0.85" /></g></g><g clip-path="url(#bodyc)"><polygon points="818,380 872,372 885,408 898,440 908,462 873,481 831,488 812,440" fill="#6c6ce4" fill-opacity="0.7"/><line x1="855.5" y1="393.5" x2="895.8" y2="480.3" stroke="#7070e8" stroke-width="2.3" stroke-opacity="0.46" /><line x1="869.6" y1="394.4" x2="904.7" y2="439.8" stroke="#7878ec" stroke-width="1.2" stroke-opacity="0.44" /><line x1="831.0" y1="388.6" x2="880.7" y2="451.6" stroke="#7878ec" stroke-width="1.8" stroke-opacity="0.35" /><line x1="871.4" y1="384.7" x2="928.1" y2="458.9" stroke="#7070e8" stroke-width="2.2" stroke-opacity="0.34" /><line x1="815.1" y1="396.8" x2="846.7" y2="441.4" stroke="#7878ec" stroke-width="2.7" stroke-opacity="0.39" /><line x1="877.5" y1="388.5" x2="928.3" y2="459.7" stroke="#7070e8" stroke-width="1.4" stroke-opacity="0.59" /><line x1="839.9" y1="375.5" x2="869.1" y2="438.1" stroke="#5050c0" stroke-width="1.1" stroke-opacity="0.39" /><line x1="854.2" y1="375.1" x2="902.6" y2="447.9" stroke="#5050c0" stroke-width="1.7" stroke-opacity="0.39" /><line x1="860.3" y1="379.6" x2="903.1" y2="438.8" stroke="#5050c0" stroke-width="3.0" stroke-opacity="0.31" /><line x1="863.7" y1="396.1" x2="882.6" y2="432.8" stroke="#5050c0" stroke-width="1.8" stroke-opacity="0.55" /><line x1="844.4" y1="392.7" x2="879.5" y2="468.7" stroke="#7878ec" stroke-width="2.5" stroke-opacity="0.58" /><line x1="876.2" y1="383.6" x2="909.5" y2="439.2" stroke="#5050c0" stroke-width="1.2" stroke-opacity="0.52" /><line x1="866.8" y1="396.5" x2="884.7" y2="435.1" stroke="#7878ec" stroke-width="1.4" stroke-opacity="0.45" /><line x1="838.6" y1="378.7" x2="866.7" y2="430.9" stroke="#7878ec" stroke-width="1.6" stroke-opacity="0.4" /><line x1="826.5" y1="377.0" x2="850.6" y2="421.2" stroke="#5050c0" stroke-width="1.3" stroke-opacity="0.31" /><line x1="879.1" y1="388.3" x2="918.4" y2="444.4" stroke="#7070e8" stroke-width="1.7" stroke-opacity="0.38" /><line x1="857.3" y1="378.6" x2="910.4" y2="473.3" stroke="#5050c0" stroke-width="1.7" stroke-opacity="0.36" /><line x1="878.8" y1="389.1" x2="900.1" y2="433.6" stroke="#5050c0" stroke-width="1.2" stroke-opacity="0.43" /><line x1="824.7" y1="396.1" x2="856.8" y2="447.6" stroke="#7070e8" stroke-width="2.7" stroke-opacity="0.59" /><line x1="844.5" y1="387.2" x2="892.2" y2="464.8" stroke="#5050c0" stroke-width="1.9" stroke-opacity="0.57" /><line x1="822.3" y1="395.6" x2="867.6" y2="458.1" stroke="#5050c0" stroke-width="2.7" stroke-opacity="0.35" /><line x1="847.0" y1="387.9" x2="887.6" y2="454.9" stroke="#7878ec" stroke-width="2.6" stroke-opacity="0.53" /><line x1="860.1" y1="391.6" x2="911.2" y2="469.5" stroke="#7070e8" stroke-width="2.3" stroke-opacity="0.55" /><line x1="832.2" y1="399.5" x2="869.9" y2="481.4" stroke="#5050c0" stroke-width="2.3" stroke-opacity="0.47" /><line x1="815.8" y1="388.7" x2="843.5" y2="439.1" stroke="#5050c0" stroke-width="1.6" stroke-opacity="0.45" /><line x1="858.8" y1="383.9" x2="891.4" y2="433.3" stroke="#5050c0" stroke-width="1.7" stroke-opacity="0.55" /><line x1="871.5" y1="392.2" x2="916.9" y2="490.6" stroke="#7070e8" stroke-width="1.3" stroke-opacity="0.59" /><line x1="827.9" y1="384.1" x2="884.3" y2="466.4" stroke="#7878ec" stroke-width="2.4" stroke-opacity="0.52" /><line x1="826.2" y1="394.5" x2="865.2" y2="465.1" stroke="#5050c0" stroke-width="1.6" stroke-opacity="0.47" /><line x1="871.4" y1="381.8" x2="935.3" y2="470.9" stroke="#7070e8" stroke-width="1.9" stroke-opacity="0.5" /></g><polygon points="820,430 880,440 900,455 894,470 873,481 847,483 831,488 800,480 790,460" fill="#6464e6" fill-opacity="0.8"/><polygon points="555,510 585,540 610,575 599,593 588,595 575,585 560,560 548,530" fill="#6262e4" fill-opacity="0.85"/><g clip-path="url(#bodyc)"><polygon points="666.4,505.3 688.4,497.4 695.1,508.4 673.1,516.3" fill="#7070e8" fill-opacity="0.45"/><polygon points="781.9,508.8 793.9,504.4 801.0,516.1 789.0,520.4" fill="#7a7aee" fill-opacity="0.2"/><polygon points="875.2,387.1 886.3,383.0 895.3,397.7 884.1,401.7" fill="#7070e8" fill-opacity="0.37"/><polygon points="773.2,517.2 798.1,508.2 804.2,518.2 779.3,527.2" fill="#5050c0" fill-opacity="0.21"/><polygon points="699.7,461.6 710.3,457.8 720.9,475.2 710.3,479.0" fill="#4a4ab8" fill-opacity="0.21"/><polygon points="789.6,361.9 815.4,352.6 818.3,357.4 792.5,366.7" fill="#7070e8" fill-opacity="0.34"/><polygon points="702.9,458.4 715.0,454.0 718.0,459.0 705.9,463.4" fill="#7070e8" fill-opacity="0.22"/><polygon points="674.8,499.6 700.5,490.4 708.6,503.8 683.0,513.0" fill="#8080f0" fill-opacity="0.45"/><polygon points="627.5,498.0 647.8,490.6 653.7,500.4 633.4,507.7" fill="#4a4ab8" fill-opacity="0.43"/><polygon points="860.1,389.4 876.1,383.7 882.6,394.3 866.5,400.0" fill="#5050c0" fill-opacity="0.28"/><polygon points="727.3,413.5 753.6,404.1 757.7,410.7 731.3,420.2" fill="#5050c0" fill-opacity="0.2"/><polygon points="630.5,503.3 650.0,496.3 657.4,508.5 637.9,515.6" fill="#4a4ab8" fill-opacity="0.34"/><polygon points="761.7,387.1 773.4,382.9 779.1,392.1 767.3,396.3" fill="#4a4ab8" fill-opacity="0.29"/><polygon points="764.5,406.9 774.7,403.2 778.0,408.6 767.8,412.3" fill="#7070e8" fill-opacity="0.39"/><polygon points="728.8,481.8 751.7,473.5 761.9,490.2 739.0,498.4" fill="#7070e8" fill-opacity="0.3"/><polygon points="936.1,453.0 957.0,445.4 967.1,461.8 946.1,469.4" fill="#5050c0" fill-opacity="0.33"/><polygon points="837.3,484.4 850.7,479.5 858.1,491.6 844.7,496.5" fill="#5050c0" fill-opacity="0.4"/><polygon points="832.0,411.6 858.5,402.1 861.6,407.3 835.2,416.8" fill="#4a4ab8" fill-opacity="0.36"/><polygon points="590.9,459.8 607.6,453.8 617.5,470.1 600.9,476.1" fill="#7070e8" fill-opacity="0.45"/><polygon points="823.3,414.1 836.8,409.2 847.5,426.7 833.9,431.6" fill="#8080f0" fill-opacity="0.43"/><polygon points="782.3,506.9 810.1,496.9 815.9,506.3 788.1,516.3" fill="#7070e8" fill-opacity="0.42"/><polygon points="775.6,422.6 796.3,415.1 806.1,431.1 785.3,438.5" fill="#4a4ab8" fill-opacity="0.23"/><polygon points="748.0,385.3 771.9,376.7 777.8,386.3 753.9,394.9" fill="#7070e8" fill-opacity="0.44"/><polygon points="616.0,507.6 638.2,499.6 648.0,515.6 625.8,523.6" fill="#8080f0" fill-opacity="0.31"/><polygon points="827.0,457.7 852.8,448.4 856.7,454.7 830.8,464.1" fill="#7070e8" fill-opacity="0.22"/><polygon points="590.3,423.3 608.1,416.9 612.0,423.3 594.2,429.7" fill="#7a7aee" fill-opacity="0.36"/><polygon points="642.4,489.1 657.5,483.6 664.4,494.8 649.2,500.2" fill="#7070e8" fill-opacity="0.36"/><polygon points="685.2,526.2 697.7,521.7 706.5,536.2 694.1,540.7" fill="#7a7aee" fill-opacity="0.35"/><polygon points="773.0,476.1 782.2,472.8 792.6,489.8 783.4,493.2" fill="#5050c0" fill-opacity="0.32"/><polygon points="642.1,526.3 653.9,522.0 662.5,536.1 650.7,540.4" fill="#4a4ab8" fill-opacity="0.44"/><polygon points="803.1,465.3 816.5,460.5 820.5,467.1 807.1,471.9" fill="#4a4ab8" fill-opacity="0.4"/><polygon points="841.4,409.4 862.0,402.0 869.2,413.9 848.6,421.3" fill="#7a7aee" fill-opacity="0.33"/><polygon points="860.2,481.2 875.0,475.9 883.5,489.8 868.7,495.2" fill="#8080f0" fill-opacity="0.39"/><polygon points="667.7,492.8 682.9,487.3 687.3,494.5 672.1,500.0" fill="#7a7aee" fill-opacity="0.28"/><polygon points="866.8,337.3 876.5,333.8 879.9,339.3 870.2,342.7" fill="#5050c0" fill-opacity="0.33"/><polygon points="900.2,419.5 923.7,411.0 930.4,421.9 906.8,430.4" fill="#8080f0" fill-opacity="0.3"/><polygon points="699.1,417.1 708.1,413.8 714.5,424.2 705.4,427.4" fill="#7070e8" fill-opacity="0.27"/><polygon points="770.2,421.0 787.6,414.7 796.9,430.0 779.5,436.2" fill="#5050c0" fill-opacity="0.3"/><polygon points="758.2,462.7 787.3,452.2 790.8,457.9 761.6,468.4" fill="#5050c0" fill-opacity="0.24"/><polygon points="721.8,471.3 734.5,466.7 741.0,477.3 728.2,481.9" fill="#8080f0" fill-opacity="0.37"/><polygon points="875.3,431.6 898.4,423.3 903.1,431.1 880.1,439.4" fill="#5050c0" fill-opacity="0.3"/><polygon points="812.5,475.0 841.7,464.5 852.6,482.3 823.4,492.8" fill="#7a7aee" fill-opacity="0.24"/><polygon points="692.9,526.4 716.6,517.8 720.1,523.6 696.4,532.1" fill="#7070e8" fill-opacity="0.22"/><polygon points="728.6,524.7 753.0,515.9 759.5,526.7 735.2,535.4" fill="#7a7aee" fill-opacity="0.45"/><polygon points="645.7,470.5 668.6,462.3 674.4,471.8 651.5,480.0" fill="#8080f0" fill-opacity="0.37"/><polygon points="716.7,530.2 731.8,524.8 736.7,532.7 721.6,538.2" fill="#7070e8" fill-opacity="0.42"/><polygon points="731.8,407.4 754.9,399.1 763.6,413.3 740.4,421.6" fill="#7070e8" fill-opacity="0.44"/><polygon points="736.1,438.5 757.7,430.8 762.8,439.1 741.2,446.8" fill="#7070e8" fill-opacity="0.37"/><polygon points="754.7,376.2 784.1,365.6 788.7,373.0 759.2,383.6" fill="#4a4ab8" fill-opacity="0.4"/><polygon points="898.6,424.2 907.0,421.1 913.9,432.4 905.4,435.4" fill="#7a7aee" fill-opacity="0.3"/><polygon points="729.5,443.0 759.3,432.3 769.8,449.5 740.0,460.3" fill="#7070e8" fill-opacity="0.22"/><polygon points="690.2,457.9 717.8,448.0 723.6,457.5 696.0,467.4" fill="#7070e8" fill-opacity="0.34"/><polygon points="869.3,389.8 895.7,380.3 901.0,389.0 874.5,398.5" fill="#5050c0" fill-opacity="0.3"/><polygon points="744.1,400.8 769.8,391.6 779.5,407.4 753.9,416.7" fill="#5050c0" fill-opacity="0.42"/><polygon points="613.3,506.7 623.1,503.2 633.2,519.8 623.5,523.3" fill="#7070e8" fill-opacity="0.24"/><polygon points="752.6,447.4 772.4,440.2 779.2,451.4 759.5,458.5" fill="#4a4ab8" fill-opacity="0.24"/><polygon points="629.8,452.3 651.9,444.4 654.7,449.0 632.6,456.9" fill="#7a7aee" fill-opacity="0.37"/><polygon points="624.0,423.1 650.2,413.7 655.9,423.0 629.7,432.5" fill="#4a4ab8" fill-opacity="0.21"/><polygon points="612.0,492.8 635.0,484.5 643.1,497.9 620.1,506.1" fill="#7070e8" fill-opacity="0.21"/><polygon points="659.4,453.3 672.9,448.4 677.3,455.6 663.8,460.5" fill="#7070e8" fill-opacity="0.38"/><polygon points="723.8,383.9 750.0,374.5 754.5,381.9 728.3,391.3" fill="#7a7aee" fill-opacity="0.38"/><polygon points="794.2,449.9 816.4,442.0 819.3,446.7 797.1,454.7" fill="#4a4ab8" fill-opacity="0.32"/><polygon points="678.8,527.4 704.6,518.1 714.8,534.8 689.0,544.1" fill="#7a7aee" fill-opacity="0.25"/><polygon points="867.8,467.9 887.5,460.8 897.8,477.5 878.0,484.6" fill="#4a4ab8" fill-opacity="0.3"/><polygon points="919.8,454.7 945.3,445.6 948.1,450.2 922.7,459.4" fill="#4a4ab8" fill-opacity="0.24"/><polygon points="641.6,404.7 657.9,398.9 666.8,413.5 650.5,419.3" fill="#7070e8" fill-opacity="0.43"/><polygon points="793.6,491.1 806.2,486.6 817.1,504.6 804.6,509.1" fill="#8080f0" fill-opacity="0.27"/><polygon points="758.3,485.0 787.3,474.5 797.6,491.3 768.5,501.7" fill="#7070e8" fill-opacity="0.3"/><polygon points="658.0,483.6 683.9,474.3 689.7,483.7 663.8,493.0" fill="#7070e8" fill-opacity="0.45"/><polygon points="912.3,460.4 936.9,451.6 947.7,469.3 923.1,478.2" fill="#7070e8" fill-opacity="0.39"/></g><polygon points="600,470 760,415 820,470 660,530" fill="#5454cc" fill-opacity="0.7"/><polygon points="596,498 604,495 623,538 760,488 858,451 860,457 760,494 620,547 614,545" fill="#a8a8d4" fill-opacity="0.9"/><polygon points="598,500 603,498 621,541 616,543" fill="#c4c4dc" fill-opacity="0.9"/><polygon points="651,478 800,428 803,433 653,484" fill="#8c8cbc" fill-opacity="0.7"/><line x1="622" y1="548" x2="860" y2="460" stroke="#40409a" stroke-width="2" stroke-opacity="0.6" /><line x1="603" y1="500" x2="618" y2="540" stroke="#c0c0d8" stroke-width="1.5" stroke-opacity="0.8" /><polygon points="606,570 760,508 860,468 900,459 859,478 832,487 760,517 729,531 696,544 665,556 639,567 614,578 600,591" fill="#6262dc"/><polygon points="625,552 860,462 862,468 627,558" fill="#4a4ab8" fill-opacity="0.6"/><polygon points="605.3196741723724,573.2745882685114 609.3196741723724,572.2745882685114 608.8196741723724,585.2745882685114" fill="#4a4ab0" fill-opacity="0.6"/><polygon points="607.8196741723724,575.2745882685114 610.3196741723724,574.2745882685114 608.8196741723724,585.2745882685114" fill="#c4c4e4" fill-opacity="0.9"/><polygon points="618.8432075634686,564.5489886720738 622.8432075634686,563.5489886720738 622.3432075634686,576.5489886720738" fill="#4a4ab0" fill-opacity="0.6"/><polygon points="621.3432075634686,566.5489886720738 623.8432075634686,565.5489886720738 622.3432075634686,576.5489886720738" fill="#c4c4e4" fill-opacity="0.9"/><polygon points="633.7815758761792,557.9761066144812 637.7815758761792,556.9761066144812 637.2815758761792,569.9761066144812" fill="#4a4ab0" fill-opacity="0.6"/><polygon points="636.2815758761792,559.9761066144812 638.7815758761792,558.9761066144812 637.2815758761792,569.9761066144812" fill="#c4c4e4" fill-opacity="0.9"/><polygon points="648.7984919054367,551.5852534246229 652.7984919054367,550.5852534246229 652.2984919054367,563.5852534246229" fill="#4a4ab0" fill-opacity="0.6"/><polygon points="651.2984919054367,553.5852534246229 653.7984919054367,552.5852534246229 652.2984919054367,563.5852534246229" fill="#c4c4e4" fill-opacity="0.9"/><polygon points="663.8521471783414,545.2830398019323 667.8521471783414,544.2830398019323 667.3521471783414,557.2830398019323" fill="#4a4ab0" fill-opacity="0.6"/><polygon points="666.3521471783414,547.2830398019323 668.8521471783414,546.2830398019323 667.3521471783414,557.2830398019323" fill="#c4c4e4" fill-opacity="0.9"/><polygon points="679.0720935740954,539.3914476487372 683.0720935740954,538.3914476487372 682.5720935740954,551.3914476487372" fill="#4a4ab0" fill-opacity="0.6"/><polygon points="681.5720935740954,541.3914476487372 684.0720935740954,540.3914476487372 682.5720935740954,551.3914476487372" fill="#c4c4e4" fill-opacity="0.9"/><polygon points="694.2890477746644,533.4921933008898 698.2890477746644,532.4921933008898 697.7890477746644,545.4921933008898" fill="#4a4ab0" fill-opacity="0.6"/><polygon points="696.7890477746644,535.4921933008898 699.2890477746644,534.4921933008898 697.7890477746644,545.4921933008898" fill="#c4c4e4" fill-opacity="0.9"/><polygon points="709.4737467698833,527.5103421815611 713.4737467698833,526.5103421815611 712.9737467698833,539.5103421815611" fill="#4a4ab0" fill-opacity="0.6"/><polygon points="711.9737467698833,529.5103421815611 714.4737467698833,528.5103421815611 712.9737467698833,539.5103421815611" fill="#c4c4e4" fill-opacity="0.9"/><polygon points="724.6584457651022,521.5284910622324 728.6584457651022,520.5284910622324 728.1584457651022,533.5284910622324" fill="#4a4ab0" fill-opacity="0.6"/><polygon points="727.1584457651022,523.5284910622324 729.6584457651022,522.5284910622324 728.1584457651022,533.5284910622324" fill="#c4c4e4" fill-opacity="0.9"/><polygon points="739.5598896557418,514.8761788651489 743.5598896557418,513.8761788651489 743.0598896557418,526.8761788651489" fill="#4a4ab0" fill-opacity="0.6"/><polygon points="742.0598896557418,516.8761788651489 744.5598896557418,515.8761788651489 743.0598896557418,526.8761788651489" fill="#c4c4e4" fill-opacity="0.9"/><polygon points="754.4338829857114,508.15889155484 758.4338829857114,507.15889155484 757.9338829857114,520.15889155484" fill="#4a4ab0" fill-opacity="0.6"/><polygon points="756.9338829857114,510.15889155484 759.4338829857114,509.15889155484 757.9338829857114,520.15889155484" fill="#c4c4e4" fill-opacity="0.9"/><polygon points="769.465967854729,501.80584672719624 773.465967854729,500.80584672719624 772.965967854729,513.8058467271962" fill="#4a4ab0" fill-opacity="0.6"/><polygon points="771.965967854729,503.80584672719624 774.465967854729,502.80584672719624 772.965967854729,513.8058467271962" fill="#c4c4e4" fill-opacity="0.9"/><polygon points="784.5310138437451,495.52874423177286 788.5310138437451,494.52874423177286 788.0310138437451,507.52874423177286" fill="#4a4ab0" fill-opacity="0.6"/><polygon points="787.0310138437451,497.52874423177286 789.5310138437451,496.52874423177286 788.0310138437451,507.52874423177286" fill="#c4c4e4" fill-opacity="0.9"/><polygon points="799.5960598327611,489.25164173634954 803.5960598327611,488.25164173634954 803.0960598327611,501.25164173634954" fill="#4a4ab0" fill-opacity="0.6"/><polygon points="802.0960598327611,491.25164173634954 804.5960598327611,490.25164173634954 803.0960598327611,501.25164173634954" fill="#c4c4e4" fill-opacity="0.9"/><polygon points="814.661105821777,482.9745392409262 818.661105821777,481.9745392409262 818.161105821777,494.9745392409262" fill="#4a4ab0" fill-opacity="0.6"/><polygon points="817.161105821777,484.9745392409262 819.661105821777,483.9745392409262 818.161105821777,494.9745392409262" fill="#c4c4e4" fill-opacity="0.9"/><polygon points="829.7462954359776,476.7512348546741 833.7462954359776,475.7512348546741 833.2462954359776,488.7512348546741" fill="#4a4ab0" fill-opacity="0.6"/><polygon points="832.2462954359776,478.7512348546741 834.7462954359776,477.7512348546741 833.2462954359776,488.7512348546741" fill="#c4c4e4" fill-opacity="0.9"/><polygon points="845.2292494096318,471.5902501967894 849.2292494096318,470.5902501967894 848.7292494096318,483.5902501967894" fill="#4a4ab0" fill-opacity="0.6"/><polygon points="847.7292494096318,473.5902501967894 850.2292494096318,472.5902501967894 848.7292494096318,483.5902501967894" fill="#c4c4e4" fill-opacity="0.9"/><defs><linearGradient id="pg" x1="0" y1="0" x2="0" y2="1"><stop offset="0" stop-color="#e4e4f8"/><stop offset="0.5" stop-color="#c8c8f0"/><stop offset="1" stop-color="#7070e0" stop-opacity="0.3"/></linearGradient></defs><polygon points="549,394 550,393 554,397 555,418 549,414" fill="url(#pg)"/><polygon points="574,385 575,384 579,388 580,409 574,405" fill="url(#pg)"/><polygon points="604,376 605,375 609,379 610,400 604,396" fill="url(#pg)"/><polygon points="636,365 637,364 641,368 642,389 636,385" fill="url(#pg)"/><polygon points="667,355 668,354 672,358 673,379 667,375" fill="url(#pg)"/><polygon points="697,346 698,345 702,349 703,370 697,366" fill="url(#pg)"/><polygon points="726,337 727,336 731,340 732,361 726,357" fill="url(#pg)"/><polygon points="748,329 749,328 753,332 754,353 748,349" fill="url(#pg)"/><polygon points="584,402 585,401 590,405 591,424 584,420" fill="url(#pg)"/><polygon points="615,391 616,390 621,394 622,413 615,409" fill="url(#pg)"/><polygon points="647,380 648,379 653,383 654,402 647,398" fill="url(#pg)"/><polygon points="680,370 681,369 686,373 687,392 680,388" fill="url(#pg)"/><polygon points="711,359 712,358 717,362 718,381 711,377" fill="url(#pg)"/><polygon points="629,511 630,510 634,514 635,537 629,533" fill="url(#pg)"/><polygon points="657,501 658,500 662,504 663,527 657,523" fill="url(#pg)"/><polygon points="690,489 691,488 695,492 696,515 690,511" fill="url(#pg)"/><polygon points="725,476 726,475 730,479 731,502 725,498" fill="url(#pg)"/><polygon points="758,463 759,462 763,466 764,489 758,485" fill="url(#pg)"/><polygon points="791,451 792,450 796,454 797,477 791,473" fill="url(#pg)"/><polygon points="820,439 821,438 825,442 826,465 820,461" fill="url(#pg)"/><polygon points="844,430 845,429 849,433 850,456 844,452" fill="url(#pg)"/><polygon points="616,486 617,485 621,489 622,510 616,506" fill="url(#pg)"/><polygon points="643,480 644,479 648,483 649,504 643,500" fill="url(#pg)"/><polygon points="674,470 675,469 679,473 680,494 674,490" fill="url(#pg)"/><polygon points="709,457 710,456 714,460 715,481 709,477" fill="url(#pg)"/><polygon points="742,444 743,443 747,447 748,468 742,464" fill="url(#pg)"/><polygon points="775,432 776,431 780,435 781,456 775,452" fill="url(#pg)"/><polygon points="805,421 806,420 810,424 811,445 805,441" fill="url(#pg)"/><polygon points="828,413 829,412 833,416 834,437 828,433" fill="url(#pg)"/><polygon points="538,428 547,422 594,491 590,499" fill="#d0d0e4"/><polygon points="547,422 594,408 646,476 594,492" fill="#babaf0"/><polygon points="594,492 646,476 647,482 595,499" fill="#d8d8e8"/><line x1="548" y1="426" x2="594" y2="490" stroke="#8a8ab0" stroke-width="1" /><line x1="569" y1="443" x2="603" y2="432" stroke="#3434b0" stroke-width="3" /><line x1="586" y1="467" x2="621" y2="455" stroke="#3434b0" stroke-width="3" /><line x1="558" y1="427" x2="572" y2="423" stroke="#7070a0" stroke-width="1" stroke-dasharray="1,2"/><line x1="599" y1="484" x2="632" y2="474" stroke="#7070a0" stroke-width="1" stroke-dasharray="1,2"/><polygon points="731,356 737,352 799,416 797,422" fill="#d0d0e4"/><polygon points="737,352 782,343 843,403 799,416" fill="#babaf0"/><polygon points="799,416 843,403 843,408 800,422" fill="#d8d8e8"/><line x1="739" y1="357" x2="799" y2="414" stroke="#8a8ab0" stroke-width="1" /><line x1="786" y1="401" x2="822" y2="389" stroke="#3434b0" stroke-width="2" /><line x1="789" y1="364" x2="795" y2="361" stroke="#3434b0" stroke-width="2" /><line x1="750" y1="360" x2="780" y2="350" stroke="#7070a0" stroke-width="1" stroke-dasharray="1,2"/><line x1="811" y1="407" x2="835" y2="399" stroke="#7070a0" stroke-width="1" stroke-dasharray="1,2"/><polygon points="623,419 746,377 760,401 647,448" fill="#d8d8e0" fill-opacity="0.95"/><polygon points="624,419 652,410 672,439 647,448" fill="#d8d8dc"/><polygon points="629.2,420.2 632.8,419.1 640.2,428.4 636.6,429.5" fill="#a0a098"/><polygon points="640.7,434.7 644.3,433.6 652.2,443.4 648.5,444.6" fill="#a0a098"/><polygon points="635.4,418.3 639.0,417.1 646.4,426.4 642.7,427.5" fill="#a0a098"/><polygon points="646.9,432.8 650.5,431.6 658.3,441.4 654.7,442.6" fill="#a0a098"/><polygon points="641.5,416.3 645.2,415.1 652.5,424.4 648.9,425.6" fill="#a0a098"/><polygon points="653.0,430.8 656.7,429.6 664.5,439.5 660.8,440.6" fill="#a0a098"/><polygon points="647.7,414.3 651.3,413.1 658.7,422.4 655.0,423.6" fill="#a0a098"/><polygon points="659.2,428.8 662.8,427.6 670.6,437.5 667.0,438.7" fill="#a0a098"/><line x1="624" y1="420" x2="647" y2="447" stroke="#e04020" stroke-width="1.2" /><polygon points="652,410 715,386 738,412 672,437" fill="#5050d4"/><polygon points="654,409 714,387 717,392 657,415" fill="#c8c8c0"/><polygon points="668,431 735,406 738,411 672,437" fill="#c8c8c0"/><line x1="664" y1="425" x2="692" y2="415" stroke="#d0a890" stroke-width="2" /><line x1="698" y1="413" x2="727" y2="402" stroke="#d0a890" stroke-width="2" /><circle cx="657.0" cy="415.0" r="0.9" fill="#e05a30"/><circle cx="674.0" cy="430.0" r="0.9" fill="#e05a30"/><circle cx="661.8" cy="413.2" r="0.9" fill="#e05a30"/><circle cx="678.8" cy="428.2" r="0.9" fill="#e05a30"/><circle cx="666.6" cy="411.4" r="0.9" fill="#e05a30"/><circle cx="683.6" cy="426.4" r="0.9" fill="#e05a30"/><circle cx="671.4" cy="409.6" r="0.9" fill="#e05a30"/><circle cx="688.4" cy="424.6" r="0.9" fill="#e05a30"/><circle cx="676.2" cy="407.8" r="0.9" fill="#e05a30"/><circle cx="693.2" cy="422.8" r="0.9" fill="#e05a30"/><circle cx="681.0" cy="406.0" r="0.9" fill="#e05a30"/><circle cx="698.0" cy="421.0" r="0.9" fill="#e05a30"/><circle cx="685.8" cy="404.2" r="0.9" fill="#e05a30"/><circle cx="702.8" cy="419.2" r="0.9" fill="#e05a30"/><circle cx="690.6" cy="402.4" r="0.9" fill="#e05a30"/><circle cx="707.6" cy="417.4" r="0.9" fill="#e05a30"/><circle cx="695.4" cy="400.6" r="0.9" fill="#e05a30"/><circle cx="712.4" cy="415.6" r="0.9" fill="#e05a30"/><circle cx="700.2" cy="398.8" r="0.9" fill="#e05a30"/><circle cx="717.2" cy="413.8" r="0.9" fill="#e05a30"/><circle cx="705.0" cy="397.0" r="0.9" fill="#e05a30"/><circle cx="722.0" cy="412.0" r="0.9" fill="#e05a30"/><circle cx="709.8" cy="395.2" r="0.9" fill="#e05a30"/><circle cx="726.8" cy="410.2" r="0.9" fill="#e05a30"/><circle cx="714.6" cy="393.4" r="0.9" fill="#e05a30"/><circle cx="731.6" cy="408.4" r="0.9" fill="#e05a30"/><rect x="681.1" y="418.4" width="1" height="1" fill="#3030a0"/><rect x="720.5" y="402.5" width="1" height="1" fill="#ffffff"/><rect x="709.7" y="415.4" width="1" height="1" fill="#e06040"/><rect x="676.8" y="413.6" width="1" height="1" fill="#e06040"/><rect x="699.4" y="411.8" width="1" height="1" fill="#e06040"/><rect x="698.1" y="404.0" width="1" height="1" fill="#8080f0"/><rect x="718.5" y="404.2" width="1" height="1" fill="#ffffff"/><rect x="698.4" y="402.1" width="1" height="1" fill="#ffffff"/><rect x="675.6" y="409.8" width="1" height="1" fill="#3030a0"/><rect x="698.3" y="415.7" width="1" height="1" fill="#e06040"/><rect x="716.4" y="413.2" width="1" height="1" fill="#e06040"/><rect x="711.1" y="408.1" width="1" height="1" fill="#8080f0"/><rect x="711.5" y="398.0" width="1" height="1" fill="#8080f0"/><rect x="691.3" y="408.7" width="1" height="1" fill="#e06040"/><rect x="719.1" y="410.8" width="1" height="1" fill="#e06040"/><rect x="694.4" y="410.2" width="1" height="1" fill="#3030a0"/><rect x="696.4" y="410.0" width="1" height="1" fill="#8080f0"/><rect x="723.5" y="405.7" width="1" height="1" fill="#ffffff"/><rect x="726.2" y="411.0" width="1" height="1" fill="#8080f0"/><rect x="704.8" y="405.2" width="1" height="1" fill="#ffffff"/><rect x="703.6" y="403.3" width="1" height="1" fill="#3030a0"/><rect x="675.2" y="410.6" width="1" height="1" fill="#e06040"/><rect x="676.7" y="425.3" width="1" height="1" fill="#e06040"/><rect x="711.2" y="396.5" width="1" height="1" fill="#e06040"/><rect x="718.8" y="411.3" width="1" height="1" fill="#ffffff"/><rect x="707.0" y="413.4" width="1" height="1" fill="#e06040"/><rect x="706.1" y="404.8" width="1" height="1" fill="#3030a0"/><rect x="705.3" y="418.9" width="1" height="1" fill="#3030a0"/><rect x="659.4" y="417.4" width="1" height="1" fill="#ffffff"/><rect x="731.4" y="408.7" width="1" height="1" fill="#3030a0"/><rect x="696.4" y="404.8" width="1" height="1" fill="#ffffff"/><rect x="721.9" y="399.2" width="1" height="1" fill="#3030a0"/><rect x="730.7" y="407.5" width="1" height="1" fill="#e06040"/><rect x="695.3" y="419.9" width="1" height="1" fill="#e06040"/><rect x="706.4" y="410.2" width="1" height="1" fill="#ffffff"/><rect x="711.1" y="415.5" width="1" height="1" fill="#3030a0"/><rect x="695.8" y="416.6" width="1" height="1" fill="#8080f0"/><rect x="721.1" y="401.5" width="1" height="1" fill="#3030a0"/><rect x="698.1" y="412.2" width="1" height="1" fill="#ffffff"/><rect x="722.1" y="412.5" width="1" height="1" fill="#3030a0"/><rect x="669.3" y="424.2" width="1" height="1" fill="#8080f0"/><rect x="671.9" y="423.5" width="1" height="1" fill="#e06040"/><rect x="694.7" y="421.1" width="1" height="1" fill="#3030a0"/><rect x="701.7" y="400.1" width="1" height="1" fill="#ffffff"/><rect x="714.7" y="395.3" width="1" height="1" fill="#3030a0"/><rect x="680.3" y="416.9" width="1" height="1" fill="#3030a0"/><rect x="671.0" y="414.7" width="1" height="1" fill="#3030a0"/><rect x="712.4" y="401.1" width="1" height="1" fill="#e06040"/><rect x="677.9" y="425.1" width="1" height="1" fill="#8080f0"/><rect x="679.6" y="412.3" width="1" height="1" fill="#3030a0"/><rect x="674.7" y="413.4" width="1" height="1" fill="#e06040"/><rect x="697.7" y="403.1" width="1" height="1" fill="#3030a0"/><rect x="726.1" y="404.6" width="1" height="1" fill="#8080f0"/><rect x="698.7" y="418.3" width="1" height="1" fill="#8080f0"/><rect x="675.2" y="424.6" width="1" height="1" fill="#8080f0"/><rect x="718.2" y="402.8" width="1" height="1" fill="#8080f0"/><rect x="704.8" y="399.2" width="1" height="1" fill="#8080f0"/><rect x="691.0" y="420.8" width="1" height="1" fill="#8080f0"/><rect x="714.9" y="401.8" width="1" height="1" fill="#ffffff"/><rect x="711.6" y="403.1" width="1" height="1" fill="#8080f0"/><polygon points="715,386 746,377 760,400 738,412" fill="#d8d8dc"/><polygon points="720.6,387.0 724.6,385.8 732.0,394.1 727.9,395.3" fill="#a0a098"/><polygon points="732.1,400.0 736.1,398.8 743.9,407.7 739.9,408.8" fill="#a0a098"/><polygon points="727.4,385.0 731.4,383.8 738.8,392.2 734.7,393.3" fill="#a0a098"/><polygon points="738.9,398.0 742.9,396.8 750.7,405.7 746.7,406.9" fill="#a0a098"/><polygon points="734.2,383.0 738.2,381.9 745.6,390.2 741.6,391.4" fill="#a0a098"/><polygon points="745.7,396.0 749.7,394.9 757.5,403.7 753.5,404.9" fill="#a0a098"/><polygon points="741.0,381.1 745.1,379.9 752.4,388.2 748.4,389.4" fill="#a0a098"/><polygon points="752.5,394.1 756.6,392.9 764.4,401.7 760.3,402.9" fill="#a0a098"/><line x1="738" y1="378" x2="760" y2="399" stroke="#e04020" stroke-width="1.2" /><line x1="650" y1="433" x2="735" y2="405" stroke="#ffffff" stroke-width="0.8" stroke-opacity="0.5" /><polygon points="564,452 626,431 634,443 574,465" fill="#d03c22"/><line x1="569" y1="458" x2="630" y2="437" stroke="#8a2010" stroke-width="2" /><polygon points="754,387 809,367 817,378 761,396" fill="#d03c22"/><line x1="757" y1="391" x2="813" y2="372" stroke="#8a2010" stroke-width="2" /><polygon points="444,475 560,448 574,468 491,518 468,531" fill="#a6a6de"/><polygon points="475,476 491,472 493,482 477,486" fill="#8a8ac0" fill-opacity="0.8"/><polygon points="497,470 513,466 515,476 499,480" fill="#8a8ac0" fill-opacity="0.8"/><polygon points="519,464 535,460 537,470 521,474" fill="#8a8ac0" fill-opacity="0.8"/><polygon points="541,458 557,454 559,464 543,468" fill="#8a8ac0" fill-opacity="0.8"/><polygon points="486,496 502,491 504,501 488,506" fill="#8a8ac0" fill-opacity="0.7"/><polygon points="508,490 524,485 526,495 510,500" fill="#8a8ac0" fill-opacity="0.7"/><polygon points="530,484 546,479 548,489 532,494" fill="#8a8ac0" fill-opacity="0.7"/><line x1="453" y1="489" x2="560" y2="456" stroke="#707088" stroke-width="3" /><line x1="455" y1="493" x2="490" y2="482" stroke="#c0c0f0" stroke-width="1.5" /><polygon points="444,475 454,473 478,527 468,531" fill="#9090b8"/><polygon points="491,509 573,469 576,476 491,518" fill="#b8f0b8"/><line x1="468" y1="469" x2="560" y2="448" stroke="#b0e8b0" stroke-width="1" stroke-opacity="0.7" /><polygon points="805,363 879,326 892,337 892,341 903,347 917,358 916,363 910,367 896,370 824,384 811,372" fill="#b0b0ea"/><polygon points="815,361 827,355 827,369" fill="#8a8ac4" fill-opacity="0.85"/><polygon points="833,352 845,346 845,360" fill="#8a8ac4" fill-opacity="0.85"/><polygon points="851,343 863,337 863,351" fill="#8a8ac4" fill-opacity="0.85"/><polygon points="869,334 881,328 881,342" fill="#8a8ac4" fill-opacity="0.85"/><polygon points="832,372 840,370 841,380" fill="#9494cc" fill-opacity="0.7"/><polygon points="850,367 858,365 859,375" fill="#9494cc" fill-opacity="0.7"/><polygon points="868,362 876,360 877,370" fill="#9494cc" fill-opacity="0.7"/><polygon points="879,336 892,338 895,349 887,349" fill="#7878a8" fill-opacity="0.9"/><line x1="811" y1="372" x2="893" y2="341" stroke="#5c5c70" stroke-width="3" /><polygon points="823,380 897,362 896,370 824,384" fill="#b4eab4"/><line x1="806" y1="363" x2="879" y2="326" stroke="#c0f0c0" stroke-width="1" stroke-opacity="0.8" /><polygon points="903,347 917,358 916,363 910,367 900,360" fill="#9a9ad4"/></svg>
<div class="a" style="left:316px;top:695px;width:761px;height:1px;background:#a0a0a0;"></div>
<svg class="a" style="left:640px;top:696px" width="112" height="10" viewBox="0 0 112 10"><path d="M2 2.5 L5.5 6 L9 2.5" stroke="#000" stroke-width="1.6" fill="none"/><path d="M102 2.5 L105.5 6 L109 2.5" stroke="#000" stroke-width="1.6" fill="none"/><line x1="13" y1="5.5" x2="99" y2="5.5" stroke="#555" stroke-width="1" stroke-dasharray="1,2"/></svg>
<div class="a" style="left:315px;top:706px;width:70px;height:20px;background:#e5e5e5;"></div>
<div class="a" style="left:316px;top:705px;width:68px;height:1px;background:#fff;"></div>
<div class="a" style="left:315px;top:706px;width:1px;height:20px;background:#fff;"></div>
<div class="a" style="left:384px;top:706px;width:1px;height:19px;background:#8a8a8a;"></div>
<div class="t" style="left:320px;top:708px;font-size:12.5px;color:#000;">Command</div>
<div class="a" style="left:315px;top:725px;width:763px;height:1px;background:#fff;"></div>
<div class="a" style="left:314px;top:725px;width:1px;height:76px;background:#fff;"></div>
<div class="a" style="left:1077px;top:725px;width:1px;height:76px;background:#8a8a8a;"></div>
<div class="a" style="left:314px;top:800px;width:764px;height:1px;background:#8a8a8a;"></div>
<div class="t" style="left:324px;top:734px;font-size:12.5px;color:#000;">Command (local):</div>
<div class="a" style="left:433px;top:731px;width:618px;height:21px;background:#fff;"></div>
<div class="a" style="left:433px;top:731px;width:618px;height:1px;background:#8a8a8a;"></div>
<div class="a" style="left:433px;top:731px;width:1px;height:21px;background:#8a8a8a;"></div>
<div class="a" style="left:433px;top:751px;width:618px;height:1px;background:#fff;"></div>
<div class="a" style="left:1050px;top:731px;width:1px;height:21px;background:#fff;"></div>
<div class="a" style="left:434px;top:732px;width:617px;height:20px;background:#fff;"></div>
<div class="a" style="left:1051px;top:732px;width:16px;height:18px;background:#e5e5e5;"></div>
<div class="a" style="left:1051px;top:732px;width:16px;height:1px;background:#fff;"></div>
<div class="a" style="left:1051px;top:732px;width:1px;height:18px;background:#fff;"></div>
<div class="a" style="left:1051px;top:749px;width:16px;height:1px;background:#8a8a8a;"></div>
<div class="a" style="left:1066px;top:732px;width:1px;height:18px;background:#8a8a8a;"></div>
<svg class="a" style="left:1051px;top:732px" width="16" height="18" viewBox="0 0 16 18"><path d="M4 7 L8 11 L12 7Z" fill="#000"/></svg>
<div class="a" style="left:319px;top:759px;width:754px;height:37px;background:#fff;box-sizing:border-box;border-top:2px solid #8a8a8a;border-left:2px solid #8a8a8a;border-right:1px solid #ddd;border-bottom:1px solid #ddd;"></div>
<div class="a" style="left:58px;top:803px;width:333px;height:18px;background:#e5e5e5;box-sizing:border-box;border-top:1px solid #8a8a8a;border-left:1px solid #8a8a8a;border-right:1px solid #fff;"></div>
<div class="a" style="left:393px;top:803px;width:100px;height:18px;background:#e5e5e5;box-sizing:border-box;border-top:1px solid #8a8a8a;border-left:1px solid #8a8a8a;border-right:1px solid #fff;"></div>
<div class="a" style="left:495px;top:803px;width:100px;height:18px;background:#e5e5e5;box-sizing:border-box;border-top:1px solid #8a8a8a;border-left:1px solid #8a8a8a;border-right:1px solid #fff;"></div>
<div class="a" style="left:597px;top:803px;width:482px;height:18px;background:#e5e5e5;box-sizing:border-box;border-top:1px solid #8a8a8a;border-left:1px solid #8a8a8a;border-right:1px solid #fff;"></div>
<svg class="a" style="left:1066px;top:808px" width="13" height="13" viewBox="0 0 13 13"><path d="M12 3 L3 12 M12 7 L7 12 M12 10 L10 12" stroke="#8a8a8a" stroke-width="1"/><path d="M12 4 L4 12 M12 8 L8 12" stroke="#fff" stroke-width="1"/></svg>
</body></html>
